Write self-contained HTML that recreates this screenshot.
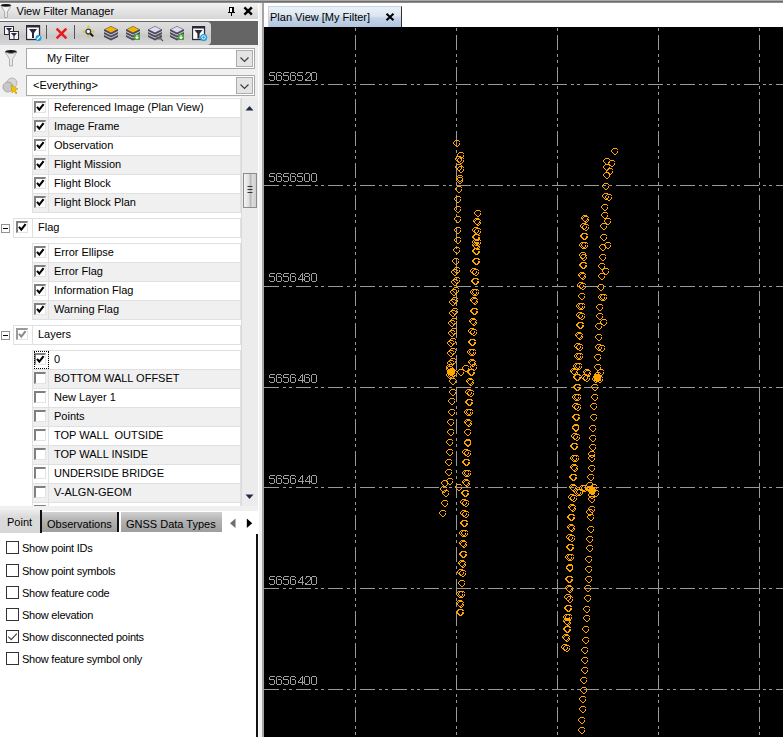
<!DOCTYPE html>
<html><head><meta charset="utf-8"><style>
*{box-sizing:border-box}
html,body{margin:0;padding:0;width:783px;height:737px;overflow:hidden;background:#f0f0f0;font-family:"Liberation Sans",sans-serif;font-size:11px;color:#000}
.abs{position:absolute}
#topstrip{position:absolute;left:0;top:0;width:783px;height:3px;background:linear-gradient(#a8a8a8 0,#a8a8a8 1px,#6e6e6e 1px,#6e6e6e 2px,#8c8c8c 2px)}
#title{position:absolute;left:0;top:3px;width:258px;height:16px;background:linear-gradient(#f2f2f2,#d6d6d6)}
#title .t{position:absolute;left:16.5px;top:1px;font-size:11px;line-height:14px;color:#000}
#tbwhite{position:absolute;left:0;top:19px;width:258px;height:2px;background:#fafafa}
#toolbar{position:absolute;left:0;top:21px;width:258px;height:24px;background:#656565}
#tbl{position:absolute;left:0;top:1px;width:211px;height:23px;background:linear-gradient(#dedede,#d2d2d2 45%,#c8c8c8 60%,#d6d6d6);border-radius:0 4px 4px 0}
.combo{position:absolute;left:26px;width:229px;height:21px;background:#fff;border:1px solid #a8a8a8}
.combo .t{position:absolute;top:3px;line-height:13px;font-size:11px}
.combo .btn{position:absolute;right:1px;top:1px;width:17px;height:17px;background:#e4e4e4;border:1px solid #acacac}
.row{position:absolute;height:20px;border:1px solid #e0e0e0}
.row .cbcell{position:absolute;left:15px;top:0;width:1px;height:18px;background:#e0e0e0}
.row .rt{position:absolute;left:21px;top:1px;line-height:14px;white-space:pre}
.cb3{position:absolute;width:12px;height:12px;background:#fff;border-top:2px solid #808080;border-left:2px solid #808080;border-right:1px solid #e3e3e3;border-bottom:1px solid #e3e3e3}
.cb3 .ck{position:absolute;left:-2px;top:-2px}
.exp{position:absolute;width:9px;height:9px;border:1px solid #939393;background:#fff}
.exp:after{content:"";position:absolute;left:1px;top:3px;width:5px;height:1px;background:#000}
#scroll{position:absolute;left:241px;top:98px;width:17px;height:408px;background:#ececec;border-left:1px solid #dadada}
#thumb{position:absolute;left:243px;top:173px;width:14px;height:35px;border:1px solid #8c8c8c;background:linear-gradient(90deg,#f4f4f4,#e0e0e0 40%,#b8b8b8 55%,#dcdcdc 70%,#cfcfcf)}
#tabpage{position:absolute;left:0;top:510px;width:258px;height:227px;background:#fff}
.tab{position:absolute;height:20px;font-size:11px;line-height:14px;padding-top:3px;border-right:2px solid #111}
.cbf{position:absolute;left:6px;width:13px;height:13px;border:1px solid #333;background:#fff}
.ct{position:absolute;left:22px;line-height:14px;font-size:11px;letter-spacing:-0.25px;white-space:nowrap}
#split{position:absolute;left:258px;top:3px;width:6px;height:734px;background:#f2f2f2;border-left:1px solid #fff}
#splitline{position:absolute;left:262px;top:3px;width:2px;height:734px;background:#a4a4a4}
#docstrip{position:absolute;left:264px;top:3px;width:519px;height:24px;background:#fff}
#doctab{position:absolute;left:268px;top:6px;width:134px;height:21px;background:linear-gradient(#eaf0f7,#dce6f1 45%,#c4d5e8 55%,#b0c5de);border-right:1px solid #333;border-top:1px solid #c8d4e4;border-left:1px solid #c8d4e4}
#doctab .t{position:absolute;left:1px;top:3px;line-height:14px;font-size:11px;color:#000}
</style></head><body>
<div id="topstrip"></div>
<div id="title"><svg class="abs" style="left:0;top:0" width="14" height="16" viewBox="0 0 14 16"><path d="M0.8 2.4 Q6 5 11.2 2.4 L7.3 9 V14.5 H4.7 V9 Z" fill="#f4f4f4" stroke="#9c9c9c" stroke-width="0.9"/><ellipse cx="6" cy="2.3" rx="4.9" ry="1.3" fill="#111"/></svg><span class="t">View Filter Manager</span>
<svg class="abs" style="left:0;top:-3px" width="258" height="20" viewBox="0 0 258 20" shape-rendering="crispEdges"><path d="M229 7h5v5h-5z M228 12h7v1h-7z M231 13h1v3h-1z" fill="#000"/><path d="M230 8h2v4h-2z" fill="#fff"/></svg>
<svg class="abs" style="left:243px;top:0px" width="11" height="16" viewBox="0 0 11 16"><path d="M2.3 5.3 L7.9 10.7 M7.9 5.3 L2.3 10.7" stroke="#000" stroke-width="2.5" stroke-linecap="square"/></svg>
</div>
<div id="tbwhite"></div>
<div id="toolbar"><div id="tbl"></div></div>

<svg class="abs" style="left:4px;top:26px" width="16" height="15" viewBox="0 0 16 15">
 <rect x="0.5" y="0.5" width="9" height="8" fill="#f4f4f8" stroke="#2a2a3a"/>
 <rect x="5.5" y="5.5" width="9" height="8" fill="#f4f4f8" stroke="#2a2a3a"/>
 <path d="M2 2 H8 L5.5 5 V8 H4.5 V5 Z" fill="#2a2a3a"/><path d="M7 7 H13 L10.5 10 V13 H9.5 V10 Z" fill="#2a2a3a"/>
</svg>
<svg class="abs" style="left:26px;top:25px" width="16" height="16" viewBox="0 0 16 16">
 <rect x="0.5" y="0.5" width="13" height="14" fill="#fff" stroke="#2a2a3a" stroke-width="1.3"/>
 <rect x="0.5" y="0.5" width="13" height="2" fill="#2a2a3a"/>
 <path d="M3 4 H11 L8 8 V13 H6 V8 Z" fill="#2a2a3a"/>
 <circle cx="12.5" cy="13" r="3" fill="#1a9ee0"/><path d="M11 14.5 L14 11.5" stroke="#fff" stroke-width="1.2"/>
</svg>
<div class="abs" style="left:46px;top:25px;width:1px;height:14px;background:#555"></div>
<svg class="abs" style="left:55px;top:27px" width="13" height="13" viewBox="0 0 13 13"><path d="M1.6 1.6 L11.4 11.4 M11.4 1.6 L1.6 11.4" stroke="#ec1a1e" stroke-width="2.5"/></svg>
<div class="abs" style="left:74px;top:25px;width:1px;height:14px;background:#555"></div>
<svg class="abs" style="left:82px;top:25px" width="14" height="14" viewBox="0 0 14 14">
 <path d="M6.5 0 L8.3 2.4 H4.7 Z M0 6.8 L2.4 5 V8.6 Z M13 6.8 L10.6 5 V8.6 Z M6.5 13 L4.7 10.6 H8.3 Z" fill="#e9c31c"/>
 <path d="M8 8.3 L11.2 11.4" stroke="#111" stroke-width="2"/>
 <circle cx="6.3" cy="6.6" r="2.4" fill="#f2f2f2" stroke="#3a3a3a" stroke-width="1.3"/>
</svg>
<svg class="abs" style="left:103px;top:25px" width="17" height="17" viewBox="0 0 17 17">
 <path d="M1 10 L8 13.5 L15 10 L15 12 L8 15.5 L1 12 Z" fill="#4a4a5e"/>
 <path d="M1 7 L8 10.5 L15 7 L15 9 L8 12.5 L1 9 Z" fill="#4a4a5e"/>
 <path d="M1 4.5 L8 1 L15 4.5 L15 6 L8 9.5 L1 6 Z" fill="#4a4a5e"/>
 <path d="M2 4.5 L8 1.6 L14 4.5 L8 7.6 Z" fill="#f2b400"/>
 
</svg><svg class="abs" style="left:125px;top:25px" width="17" height="17" viewBox="0 0 17 17">
 <path d="M1 10 L8 13.5 L15 10 L15 12 L8 15.5 L1 12 Z" fill="#4a4a5e"/>
 <path d="M1 7 L8 10.5 L15 7 L15 9 L8 12.5 L1 9 Z" fill="#4a4a5e"/>
 <path d="M1 4.5 L8 1 L15 4.5 L15 6 L8 9.5 L1 6 Z" fill="#4a4a5e"/>
 <path d="M2 4.5 L8 1.6 L14 4.5 L8 7.6 Z" fill="#f2b400"/>
 <rect x="9" y="9" width="6" height="6" fill="#4c9e3a"/><path d="M12 10 V13.5 M10.5 12 L12 13.5 L13.5 12" stroke="#fff" stroke-width="1.1"/>
</svg><svg class="abs" style="left:147px;top:25px" width="17" height="17" viewBox="0 0 17 17">
 <path d="M1 10 L8 13.5 L15 10 L15 12 L8 15.5 L1 12 Z" fill="#4a4a5e"/>
 <path d="M1 7 L8 10.5 L15 7 L15 9 L8 12.5 L1 9 Z" fill="#4a4a5e"/>
 <path d="M1 4.5 L8 1 L15 4.5 L15 6 L8 9.5 L1 6 Z" fill="#4a4a5e"/>
 <path d="M2 4.5 L8 1.6 L14 4.5 L8 7.6 Z" fill="#dcdcf0"/>
 <circle cx="12" cy="12" r="2.2" fill="none" stroke="#555" stroke-width="1"/><path d="M13.5 13.5 L16 16" stroke="#555" stroke-width="1.2"/>
</svg><svg class="abs" style="left:169px;top:25px" width="17" height="17" viewBox="0 0 17 17">
 <path d="M1 10 L8 13.5 L15 10 L15 12 L8 15.5 L1 12 Z" fill="#4a4a5e"/>
 <path d="M1 7 L8 10.5 L15 7 L15 9 L8 12.5 L1 9 Z" fill="#4a4a5e"/>
 <path d="M1 4.5 L8 1 L15 4.5 L15 6 L8 9.5 L1 6 Z" fill="#4a4a5e"/>
 <path d="M2 4.5 L8 1.6 L14 4.5 L8 7.6 Z" fill="#dcdcf0"/>
 <rect x="9" y="9" width="6" height="6" fill="#4c9e3a"/><path d="M12 10 V13.5 M10.5 12 L12 13.5 L13.5 12" stroke="#fff" stroke-width="1.1"/>
</svg><svg class="abs" style="left:192px;top:26px" width="16" height="15" viewBox="0 0 16 15">
 <rect x="0.5" y="0.5" width="12" height="13" fill="#fff" stroke="#2a2a3a" stroke-width="1.3"/>
 <rect x="0.5" y="0.5" width="12" height="2" fill="#2a2a3a"/>
 <path d="M2.5 4 H10.5 L7.6 7.8 V12.5 H5.4 V7.8 Z" fill="#2a2a3a"/>
 <circle cx="11.6" cy="11.4" r="3.5" fill="#1a9ee0"/><circle cx="11.6" cy="11.4" r="1.7" fill="none" stroke="#fff" stroke-width="1"/>
</svg>
<div class="combo" style="top:48px"><span class="t" style="left:20px">My Filter</span><div class="btn"><svg width="15" height="15" viewBox="0 0 15 15" style="position:absolute;left:0;top:0"><path d="M3.5 6.5 L7.5 10.5 L11.5 6.5" fill="none" stroke="#3a3a3a" stroke-width="1.1"/></svg></div></div>
<div class="combo" style="top:75px"><span class="t" style="left:6px">&lt;Everything&gt;</span><div class="btn"><svg width="15" height="15" viewBox="0 0 15 15" style="position:absolute;left:0;top:0"><path d="M3.5 6.5 L7.5 10.5 L11.5 6.5" fill="none" stroke="#3a3a3a" stroke-width="1.1"/></svg></div></div>
<svg class="abs" style="left:3px;top:48px" width="20" height="20" viewBox="0 0 20 20"><ellipse cx="8" cy="4" rx="6" ry="2" fill="#111"/><path d="M2 4 Q8 7 14 4 L9.5 11 L9.5 18 L6.5 18 L6.5 11 Z" fill="#e8e8e8" stroke="#9a9a9a" stroke-width="0.7"/></svg>
<svg class="abs" style="left:1px;top:75px" width="22" height="20" viewBox="0 0 22 20"><circle cx="11" cy="8" r="5" fill="#d8d8d8" stroke="#aaa" stroke-width="0.8"/><circle cx="7" cy="12" r="5" fill="#c8c8c8" stroke="#999" stroke-width="0.8"/><path d="M10 10 L17 14 L14 15 L16 18 L15 19 L13 16 L11 18 Z" fill="#f5c400" stroke="#b08a00" stroke-width="0.5"/></svg>
<div class="abs" style="left:0;top:97px;width:241px;height:409px;background:#fff;overflow:hidden"><div class="abs" style="left:0;top:-97px;width:241px;height:700px"><div class="row" style="left:32px;top:98px;width:209px;background:#fff"><div class="cbcell" style="left:15px"></div><span class="rt" style="left:21px">Referenced Image (Plan View)</span></div>
<div class="cb3" style="left:34px;top:101px;border-top-color:#808080;border-left-color:#808080"><svg class="ck" width="12" height="12" viewBox="0 0 12 12"><path d="M3 5.8 L5.3 8.6 L9.6 3.2" fill="none" stroke="#000" stroke-width="2.1"/></svg></div>
<div class="row" style="left:32px;top:117px;width:209px;background:#f0f0f0"><div class="cbcell" style="left:15px"></div><span class="rt" style="left:21px">Image Frame</span></div>
<div class="cb3" style="left:34px;top:120px;border-top-color:#808080;border-left-color:#808080"><svg class="ck" width="12" height="12" viewBox="0 0 12 12"><path d="M3 5.8 L5.3 8.6 L9.6 3.2" fill="none" stroke="#000" stroke-width="2.1"/></svg></div>
<div class="row" style="left:32px;top:136px;width:209px;background:#fff"><div class="cbcell" style="left:15px"></div><span class="rt" style="left:21px">Observation</span></div>
<div class="cb3" style="left:34px;top:139px;border-top-color:#808080;border-left-color:#808080"><svg class="ck" width="12" height="12" viewBox="0 0 12 12"><path d="M3 5.8 L5.3 8.6 L9.6 3.2" fill="none" stroke="#000" stroke-width="2.1"/></svg></div>
<div class="row" style="left:32px;top:155px;width:209px;background:#f0f0f0"><div class="cbcell" style="left:15px"></div><span class="rt" style="left:21px">Flight Mission</span></div>
<div class="cb3" style="left:34px;top:158px;border-top-color:#808080;border-left-color:#808080"><svg class="ck" width="12" height="12" viewBox="0 0 12 12"><path d="M3 5.8 L5.3 8.6 L9.6 3.2" fill="none" stroke="#000" stroke-width="2.1"/></svg></div>
<div class="row" style="left:32px;top:174px;width:209px;background:#fff"><div class="cbcell" style="left:15px"></div><span class="rt" style="left:21px">Flight Block</span></div>
<div class="cb3" style="left:34px;top:177px;border-top-color:#808080;border-left-color:#808080"><svg class="ck" width="12" height="12" viewBox="0 0 12 12"><path d="M3 5.8 L5.3 8.6 L9.6 3.2" fill="none" stroke="#000" stroke-width="2.1"/></svg></div>
<div class="row" style="left:32px;top:193px;width:209px;background:#f0f0f0"><div class="cbcell" style="left:15px"></div><span class="rt" style="left:21px">Flight Block Plan</span></div>
<div class="cb3" style="left:34px;top:196px;border-top-color:#808080;border-left-color:#808080"><svg class="ck" width="12" height="12" viewBox="0 0 12 12"><path d="M3 5.8 L5.3 8.6 L9.6 3.2" fill="none" stroke="#000" stroke-width="2.1"/></svg></div>
<div class="exp" style="left:1px;top:224px"></div>
<div class="row" style="left:13px;top:218px;width:228px;background:#fff"><div class="cbcell" style="left:18px"></div><span class="rt" style="left:24px">Flag</span></div>
<div class="cb3" style="left:16px;top:221px;border-top-color:#808080;border-left-color:#808080"><svg class="ck" width="12" height="12" viewBox="0 0 12 12"><path d="M3 5.8 L5.3 8.6 L9.6 3.2" fill="none" stroke="#000" stroke-width="2.1"/></svg></div>
<div class="row" style="left:32px;top:243px;width:209px;background:#fff"><div class="cbcell" style="left:15px"></div><span class="rt" style="left:21px">Error Ellipse</span></div>
<div class="cb3" style="left:34px;top:246px;border-top-color:#808080;border-left-color:#808080"><svg class="ck" width="12" height="12" viewBox="0 0 12 12"><path d="M3 5.8 L5.3 8.6 L9.6 3.2" fill="none" stroke="#000" stroke-width="2.1"/></svg></div>
<div class="row" style="left:32px;top:262px;width:209px;background:#f0f0f0"><div class="cbcell" style="left:15px"></div><span class="rt" style="left:21px">Error Flag</span></div>
<div class="cb3" style="left:34px;top:265px;border-top-color:#808080;border-left-color:#808080"><svg class="ck" width="12" height="12" viewBox="0 0 12 12"><path d="M3 5.8 L5.3 8.6 L9.6 3.2" fill="none" stroke="#000" stroke-width="2.1"/></svg></div>
<div class="row" style="left:32px;top:281px;width:209px;background:#fff"><div class="cbcell" style="left:15px"></div><span class="rt" style="left:21px">Information Flag</span></div>
<div class="cb3" style="left:34px;top:284px;border-top-color:#808080;border-left-color:#808080"><svg class="ck" width="12" height="12" viewBox="0 0 12 12"><path d="M3 5.8 L5.3 8.6 L9.6 3.2" fill="none" stroke="#000" stroke-width="2.1"/></svg></div>
<div class="row" style="left:32px;top:300px;width:209px;background:#f0f0f0"><div class="cbcell" style="left:15px"></div><span class="rt" style="left:21px">Warning Flag</span></div>
<div class="cb3" style="left:34px;top:303px;border-top-color:#808080;border-left-color:#808080"><svg class="ck" width="12" height="12" viewBox="0 0 12 12"><path d="M3 5.8 L5.3 8.6 L9.6 3.2" fill="none" stroke="#000" stroke-width="2.1"/></svg></div>
<div class="exp" style="left:1px;top:331px"></div>
<div class="row" style="left:13px;top:325px;width:228px;background:#fff"><div class="cbcell" style="left:18px"></div><span class="rt" style="left:24px">Layers</span></div>
<div class="cb3" style="left:16px;top:328px;border-top-color:#9a9a9a;border-left-color:#9a9a9a"><svg class="ck" width="12" height="12" viewBox="0 0 12 12"><path d="M3 5.8 L5.3 8.6 L9.6 3.2" fill="none" stroke="#8c8c8c" stroke-width="2.1"/></svg></div>
<div class="row" style="left:32px;top:350px;width:209px;background:#fff"><div class="cbcell" style="left:15px"></div><span class="rt" style="left:21px">0</span></div>
<div class="cb3" style="left:34px;top:353px;border-top-color:#808080;border-left-color:#808080"><svg class="ck" width="12" height="12" viewBox="0 0 12 12"><path d="M3 5.8 L5.3 8.6 L9.6 3.2" fill="none" stroke="#000" stroke-width="2.1"/></svg></div>
<div class="abs" style="left:34px;top:351px;width:15px;height:18px;border:1px dotted #000"></div>
<div class="row" style="left:32px;top:369px;width:209px;background:#f0f0f0"><div class="cbcell" style="left:15px"></div><span class="rt" style="left:21px">BOTTOM WALL OFFSET</span></div>
<div class="cb3" style="left:34px;top:372px;border-top-color:#808080;border-left-color:#808080"></div>
<div class="row" style="left:32px;top:388px;width:209px;background:#fff"><div class="cbcell" style="left:15px"></div><span class="rt" style="left:21px">New Layer 1</span></div>
<div class="cb3" style="left:34px;top:391px;border-top-color:#808080;border-left-color:#808080"></div>
<div class="row" style="left:32px;top:407px;width:209px;background:#f0f0f0"><div class="cbcell" style="left:15px"></div><span class="rt" style="left:21px">Points</span></div>
<div class="cb3" style="left:34px;top:410px;border-top-color:#808080;border-left-color:#808080"></div>
<div class="row" style="left:32px;top:426px;width:209px;background:#fff"><div class="cbcell" style="left:15px"></div><span class="rt" style="left:21px">TOP WALL  OUTSIDE</span></div>
<div class="cb3" style="left:34px;top:429px;border-top-color:#808080;border-left-color:#808080"></div>
<div class="row" style="left:32px;top:445px;width:209px;background:#f0f0f0"><div class="cbcell" style="left:15px"></div><span class="rt" style="left:21px">TOP WALL INSIDE</span></div>
<div class="cb3" style="left:34px;top:448px;border-top-color:#808080;border-left-color:#808080"></div>
<div class="row" style="left:32px;top:464px;width:209px;background:#fff"><div class="cbcell" style="left:15px"></div><span class="rt" style="left:21px">UNDERSIDE BRIDGE</span></div>
<div class="cb3" style="left:34px;top:467px;border-top-color:#808080;border-left-color:#808080"></div>
<div class="row" style="left:32px;top:483px;width:209px;background:#f0f0f0"><div class="cbcell" style="left:15px"></div><span class="rt" style="left:21px">V-ALGN-GEOM</span></div>
<div class="cb3" style="left:34px;top:486px;border-top-color:#808080;border-left-color:#808080"></div>
<div class="row" style="left:32px;top:502px;width:209px;background:#fff"><div class="cbcell" style="left:15px"></div><span class="rt" style="left:21px"></span></div>
<div class="cb3" style="left:34px;top:505px;border-top-color:#808080;border-left-color:#808080"></div></div></div>
<div id="scroll"></div>
<svg class="abs" style="left:245px;top:105px" width="9" height="6" viewBox="0 0 9 6"><path d="M0.5 5.5 L4.5 1 L8.5 5.5 Z" fill="#1e2a4a"/></svg>
<div id="thumb"><svg width="12" height="33" viewBox="0 0 12 33" style="position:absolute;left:0;top:0"><path d="M3.5 12.5 H8.5 M3.5 15.5 H8.5 M3.5 18.5 H8.5" stroke="#333" stroke-width="1"/></svg></div>
<svg class="abs" style="left:245px;top:494px" width="9" height="6" viewBox="0 0 9 6"><path d="M0.5 0.5 L4.5 5 L8.5 0.5 Z" fill="#1e2a4a"/></svg>
<div id="tabpage"></div>
<div class="abs" style="left:0;top:506px;width:258px;height:5px;background:#f0f0f0"></div>
<div class="tab" style="left:0;top:510px;width:42px;height:23px;background:linear-gradient(#ececec,#dadada 30%,#d8d8d8);padding-left:7px;padding-top:5px">Point</div>
<div class="tab" style="left:42px;top:512px;width:77px;height:20px;background:linear-gradient(#d0d0d0,#b4b4b4 40%,#9e9e9e);padding-left:5px;padding-top:5px">Observations</div>
<div class="tab" style="left:121px;top:512px;width:101px;height:20px;background:linear-gradient(#d0d0d0,#b4b4b4 40%,#9e9e9e);padding-left:5px;padding-top:5px;border-right:none">GNSS Data Types</div>
<svg class="abs" style="left:229px;top:518px" width="8" height="11" viewBox="0 0 8 11"><path d="M6.5 0.5 L1 5.2 L6.5 10 Z" fill="#6e6e6e"/></svg>
<svg class="abs" style="left:246px;top:518px" width="8" height="11" viewBox="0 0 8 11"><path d="M0.8 0.5 L6.2 5.2 L0.8 10 Z" fill="#000"/></svg>
<div class="abs" style="left:256px;top:534px;width:2px;height:203px;background:#111"></div>
<div class="cbf" style="top:541px"></div><div class="ct" style="top:541px">Show point IDs</div>
<div class="cbf" style="top:564px"></div><div class="ct" style="top:564px">Show point symbols</div>
<div class="cbf" style="top:586px"></div><div class="ct" style="top:586px">Show feature code</div>
<div class="cbf" style="top:608px"></div><div class="ct" style="top:608px">Show elevation</div>
<div class="cbf" style="top:630px"><svg width="13" height="13" viewBox="0 0 13 13" style="position:absolute;left:0;top:0"><path d="M1.3 5.6 L4.2 8.6 L9.8 2.6" fill="none" stroke="#444" stroke-width="1.2"/></svg></div><div class="ct" style="top:630px">Show disconnected points</div>
<div class="cbf" style="top:652px"></div><div class="ct" style="top:652px">Show feature symbol only</div>
<div id="split"></div>
<div id="splitline"></div>
<div id="docstrip"></div>
<div id="doctab"><span class="t">Plan View [My Filter]</span><svg class="abs" style="left:116px;top:6px" width="10" height="8" viewBox="0 0 10 8"><path d="M1.5 0.8 L8.5 7.2 M8.5 0.8 L1.5 7.2" stroke="#000" stroke-width="2"/></svg></div>
<svg width="519" height="710" viewBox="264 27 519 710" style="position:absolute;left:264px;top:27px;display:block">
<rect x="264" y="27" width="519" height="710" fill="#000"/>
<line x1="264" y1="84.5" x2="783" y2="84.5" stroke="#999999" stroke-width="1" stroke-dasharray="15 4 3 3 3 4" stroke-dashoffset="0"/>
<line x1="264" y1="185.5" x2="783" y2="185.5" stroke="#999999" stroke-width="1" stroke-dasharray="15 4 3 3 3 4" stroke-dashoffset="0"/>
<line x1="264" y1="286.5" x2="783" y2="286.5" stroke="#999999" stroke-width="1" stroke-dasharray="15 4 3 3 3 4" stroke-dashoffset="0"/>
<line x1="264" y1="387.5" x2="783" y2="387.5" stroke="#999999" stroke-width="1" stroke-dasharray="15 4 3 3 3 4" stroke-dashoffset="0"/>
<line x1="264" y1="487.5" x2="783" y2="487.5" stroke="#999999" stroke-width="1" stroke-dasharray="15 4 3 3 3 4" stroke-dashoffset="0"/>
<line x1="264" y1="588.5" x2="783" y2="588.5" stroke="#999999" stroke-width="1" stroke-dasharray="15 4 3 3 3 4" stroke-dashoffset="0"/>
<line x1="264" y1="689.5" x2="783" y2="689.5" stroke="#999999" stroke-width="1" stroke-dasharray="15 4 3 3 3 4" stroke-dashoffset="0"/>
<line x1="355.5" y1="27" x2="355.5" y2="737" stroke="#999999" stroke-width="1" stroke-dasharray="15 4 3 3 3 4" stroke-dashoffset="24"/>
<line x1="456.5" y1="27" x2="456.5" y2="737" stroke="#999999" stroke-width="1" stroke-dasharray="15 4 3 3 3 4" stroke-dashoffset="24"/>
<line x1="557.5" y1="27" x2="557.5" y2="737" stroke="#999999" stroke-width="1" stroke-dasharray="15 4 3 3 3 4" stroke-dashoffset="24"/>
<line x1="658.5" y1="27" x2="658.5" y2="737" stroke="#999999" stroke-width="1" stroke-dasharray="15 4 3 3 3 4" stroke-dashoffset="24"/>
<line x1="759.5" y1="27" x2="759.5" y2="737" stroke="#999999" stroke-width="1" stroke-dasharray="15 4 3 3 3 4" stroke-dashoffset="24"/>
<path fill="#a0a0a0" shape-rendering="crispEdges" d="
M270 72h1v1h-1zM271 72h1v1h-1zM272 72h1v1h-1zM273 72h1v1h-1zM274 72h1v1h-1zM269 73h1v1h-1zM269 74h1v1h-1zM269 75h1v1h-1zM270 75h1v1h-1zM271 75h1v1h-1zM272 75h1v1h-1zM273 75h1v1h-1zM274 76h1v1h-1zM274 77h1v1h-1zM274 78h1v1h-1zM269 79h1v1h-1zM274 79h1v1h-1zM270 80h1v1h-1zM271 80h1v1h-1zM272 80h1v1h-1zM273 80h1v1h-1zM277 72h1v1h-1zM278 72h1v1h-1zM279 72h1v1h-1zM280 72h1v1h-1zM276 73h1v1h-1zM281 73h1v1h-1zM276 74h1v1h-1zM276 75h1v1h-1zM278 75h1v1h-1zM279 75h1v1h-1zM280 75h1v1h-1zM276 76h1v1h-1zM281 76h1v1h-1zM276 77h1v1h-1zM281 77h1v1h-1zM276 78h1v1h-1zM281 78h1v1h-1zM276 79h1v1h-1zM281 79h1v1h-1zM277 80h1v1h-1zM278 80h1v1h-1zM279 80h1v1h-1zM280 80h1v1h-1zM284 72h1v1h-1zM285 72h1v1h-1zM286 72h1v1h-1zM287 72h1v1h-1zM288 72h1v1h-1zM283 73h1v1h-1zM283 74h1v1h-1zM283 75h1v1h-1zM284 75h1v1h-1zM285 75h1v1h-1zM286 75h1v1h-1zM287 75h1v1h-1zM288 76h1v1h-1zM288 77h1v1h-1zM288 78h1v1h-1zM283 79h1v1h-1zM288 79h1v1h-1zM284 80h1v1h-1zM285 80h1v1h-1zM286 80h1v1h-1zM287 80h1v1h-1zM291 72h1v1h-1zM292 72h1v1h-1zM293 72h1v1h-1zM294 72h1v1h-1zM290 73h1v1h-1zM295 73h1v1h-1zM290 74h1v1h-1zM290 75h1v1h-1zM292 75h1v1h-1zM293 75h1v1h-1zM294 75h1v1h-1zM290 76h1v1h-1zM295 76h1v1h-1zM290 77h1v1h-1zM295 77h1v1h-1zM290 78h1v1h-1zM295 78h1v1h-1zM290 79h1v1h-1zM295 79h1v1h-1zM291 80h1v1h-1zM292 80h1v1h-1zM293 80h1v1h-1zM294 80h1v1h-1zM298 72h1v1h-1zM299 72h1v1h-1zM300 72h1v1h-1zM301 72h1v1h-1zM302 72h1v1h-1zM297 73h1v1h-1zM297 74h1v1h-1zM297 75h1v1h-1zM298 75h1v1h-1zM299 75h1v1h-1zM300 75h1v1h-1zM301 75h1v1h-1zM302 76h1v1h-1zM302 77h1v1h-1zM302 78h1v1h-1zM297 79h1v1h-1zM302 79h1v1h-1zM298 80h1v1h-1zM299 80h1v1h-1zM300 80h1v1h-1zM301 80h1v1h-1zM306 72h1v1h-1zM307 72h1v1h-1zM308 72h1v1h-1zM309 72h1v1h-1zM306 73h1v1h-1zM310 73h1v1h-1zM305 74h1v1h-1zM310 74h1v1h-1zM310 75h1v1h-1zM309 76h1v1h-1zM308 77h1v1h-1zM307 78h1v1h-1zM305 79h1v1h-1zM306 79h1v1h-1zM305 80h1v1h-1zM306 80h1v1h-1zM307 80h1v1h-1zM308 80h1v1h-1zM309 80h1v1h-1zM310 80h1v1h-1zM312 72h1v1h-1zM313 72h1v1h-1zM314 72h1v1h-1zM315 72h1v1h-1zM311 73h1v1h-1zM316 73h1v1h-1zM311 74h1v1h-1zM316 74h1v1h-1zM311 75h1v1h-1zM316 75h1v1h-1zM311 76h1v1h-1zM316 76h1v1h-1zM311 77h1v1h-1zM316 77h1v1h-1zM311 78h1v1h-1zM316 78h1v1h-1zM311 79h1v1h-1zM316 79h1v1h-1zM312 80h1v1h-1zM313 80h1v1h-1zM314 80h1v1h-1zM315 80h1v1h-1zM270 173h1v1h-1zM271 173h1v1h-1zM272 173h1v1h-1zM273 173h1v1h-1zM274 173h1v1h-1zM269 174h1v1h-1zM269 175h1v1h-1zM269 176h1v1h-1zM270 176h1v1h-1zM271 176h1v1h-1zM272 176h1v1h-1zM273 176h1v1h-1zM274 177h1v1h-1zM274 178h1v1h-1zM274 179h1v1h-1zM269 180h1v1h-1zM274 180h1v1h-1zM270 181h1v1h-1zM271 181h1v1h-1zM272 181h1v1h-1zM273 181h1v1h-1zM277 173h1v1h-1zM278 173h1v1h-1zM279 173h1v1h-1zM280 173h1v1h-1zM276 174h1v1h-1zM281 174h1v1h-1zM276 175h1v1h-1zM276 176h1v1h-1zM278 176h1v1h-1zM279 176h1v1h-1zM280 176h1v1h-1zM276 177h1v1h-1zM281 177h1v1h-1zM276 178h1v1h-1zM281 178h1v1h-1zM276 179h1v1h-1zM281 179h1v1h-1zM276 180h1v1h-1zM281 180h1v1h-1zM277 181h1v1h-1zM278 181h1v1h-1zM279 181h1v1h-1zM280 181h1v1h-1zM284 173h1v1h-1zM285 173h1v1h-1zM286 173h1v1h-1zM287 173h1v1h-1zM288 173h1v1h-1zM283 174h1v1h-1zM283 175h1v1h-1zM283 176h1v1h-1zM284 176h1v1h-1zM285 176h1v1h-1zM286 176h1v1h-1zM287 176h1v1h-1zM288 177h1v1h-1zM288 178h1v1h-1zM288 179h1v1h-1zM283 180h1v1h-1zM288 180h1v1h-1zM284 181h1v1h-1zM285 181h1v1h-1zM286 181h1v1h-1zM287 181h1v1h-1zM291 173h1v1h-1zM292 173h1v1h-1zM293 173h1v1h-1zM294 173h1v1h-1zM290 174h1v1h-1zM295 174h1v1h-1zM290 175h1v1h-1zM290 176h1v1h-1zM292 176h1v1h-1zM293 176h1v1h-1zM294 176h1v1h-1zM290 177h1v1h-1zM295 177h1v1h-1zM290 178h1v1h-1zM295 178h1v1h-1zM290 179h1v1h-1zM295 179h1v1h-1zM290 180h1v1h-1zM295 180h1v1h-1zM291 181h1v1h-1zM292 181h1v1h-1zM293 181h1v1h-1zM294 181h1v1h-1zM298 173h1v1h-1zM299 173h1v1h-1zM300 173h1v1h-1zM301 173h1v1h-1zM302 173h1v1h-1zM297 174h1v1h-1zM297 175h1v1h-1zM297 176h1v1h-1zM298 176h1v1h-1zM299 176h1v1h-1zM300 176h1v1h-1zM301 176h1v1h-1zM302 177h1v1h-1zM302 178h1v1h-1zM302 179h1v1h-1zM297 180h1v1h-1zM302 180h1v1h-1zM298 181h1v1h-1zM299 181h1v1h-1zM300 181h1v1h-1zM301 181h1v1h-1zM305 173h1v1h-1zM306 173h1v1h-1zM307 173h1v1h-1zM308 173h1v1h-1zM304 174h1v1h-1zM309 174h1v1h-1zM304 175h1v1h-1zM309 175h1v1h-1zM304 176h1v1h-1zM309 176h1v1h-1zM304 177h1v1h-1zM309 177h1v1h-1zM304 178h1v1h-1zM309 178h1v1h-1zM304 179h1v1h-1zM309 179h1v1h-1zM304 180h1v1h-1zM309 180h1v1h-1zM305 181h1v1h-1zM306 181h1v1h-1zM307 181h1v1h-1zM308 181h1v1h-1zM312 173h1v1h-1zM313 173h1v1h-1zM314 173h1v1h-1zM315 173h1v1h-1zM311 174h1v1h-1zM316 174h1v1h-1zM311 175h1v1h-1zM316 175h1v1h-1zM311 176h1v1h-1zM316 176h1v1h-1zM311 177h1v1h-1zM316 177h1v1h-1zM311 178h1v1h-1zM316 178h1v1h-1zM311 179h1v1h-1zM316 179h1v1h-1zM311 180h1v1h-1zM316 180h1v1h-1zM312 181h1v1h-1zM313 181h1v1h-1zM314 181h1v1h-1zM315 181h1v1h-1zM270 273h1v1h-1zM271 273h1v1h-1zM272 273h1v1h-1zM273 273h1v1h-1zM274 273h1v1h-1zM269 274h1v1h-1zM269 275h1v1h-1zM269 276h1v1h-1zM270 276h1v1h-1zM271 276h1v1h-1zM272 276h1v1h-1zM273 276h1v1h-1zM274 277h1v1h-1zM274 278h1v1h-1zM274 279h1v1h-1zM269 280h1v1h-1zM274 280h1v1h-1zM270 281h1v1h-1zM271 281h1v1h-1zM272 281h1v1h-1zM273 281h1v1h-1zM277 273h1v1h-1zM278 273h1v1h-1zM279 273h1v1h-1zM280 273h1v1h-1zM276 274h1v1h-1zM281 274h1v1h-1zM276 275h1v1h-1zM276 276h1v1h-1zM278 276h1v1h-1zM279 276h1v1h-1zM280 276h1v1h-1zM276 277h1v1h-1zM281 277h1v1h-1zM276 278h1v1h-1zM281 278h1v1h-1zM276 279h1v1h-1zM281 279h1v1h-1zM276 280h1v1h-1zM281 280h1v1h-1zM277 281h1v1h-1zM278 281h1v1h-1zM279 281h1v1h-1zM280 281h1v1h-1zM284 273h1v1h-1zM285 273h1v1h-1zM286 273h1v1h-1zM287 273h1v1h-1zM288 273h1v1h-1zM283 274h1v1h-1zM283 275h1v1h-1zM283 276h1v1h-1zM284 276h1v1h-1zM285 276h1v1h-1zM286 276h1v1h-1zM287 276h1v1h-1zM288 277h1v1h-1zM288 278h1v1h-1zM288 279h1v1h-1zM283 280h1v1h-1zM288 280h1v1h-1zM284 281h1v1h-1zM285 281h1v1h-1zM286 281h1v1h-1zM287 281h1v1h-1zM291 273h1v1h-1zM292 273h1v1h-1zM293 273h1v1h-1zM294 273h1v1h-1zM290 274h1v1h-1zM295 274h1v1h-1zM290 275h1v1h-1zM290 276h1v1h-1zM292 276h1v1h-1zM293 276h1v1h-1zM294 276h1v1h-1zM290 277h1v1h-1zM295 277h1v1h-1zM290 278h1v1h-1zM295 278h1v1h-1zM290 279h1v1h-1zM295 279h1v1h-1zM290 280h1v1h-1zM295 280h1v1h-1zM291 281h1v1h-1zM292 281h1v1h-1zM293 281h1v1h-1zM294 281h1v1h-1zM302 273h1v1h-1zM301 274h1v1h-1zM302 274h1v1h-1zM300 275h1v1h-1zM302 275h1v1h-1zM300 276h1v1h-1zM302 276h1v1h-1zM299 277h1v1h-1zM302 277h1v1h-1zM298 278h1v1h-1zM302 278h1v1h-1zM298 279h1v1h-1zM299 279h1v1h-1zM300 279h1v1h-1zM301 279h1v1h-1zM302 279h1v1h-1zM303 279h1v1h-1zM302 280h1v1h-1zM302 281h1v1h-1zM305 273h1v1h-1zM306 273h1v1h-1zM307 273h1v1h-1zM308 273h1v1h-1zM304 274h1v1h-1zM309 274h1v1h-1zM304 275h1v1h-1zM309 275h1v1h-1zM305 276h1v1h-1zM306 276h1v1h-1zM307 276h1v1h-1zM308 276h1v1h-1zM304 277h1v1h-1zM309 277h1v1h-1zM304 278h1v1h-1zM309 278h1v1h-1zM304 279h1v1h-1zM309 279h1v1h-1zM304 280h1v1h-1zM309 280h1v1h-1zM305 281h1v1h-1zM306 281h1v1h-1zM307 281h1v1h-1zM308 281h1v1h-1zM312 273h1v1h-1zM313 273h1v1h-1zM314 273h1v1h-1zM315 273h1v1h-1zM311 274h1v1h-1zM316 274h1v1h-1zM311 275h1v1h-1zM316 275h1v1h-1zM311 276h1v1h-1zM316 276h1v1h-1zM311 277h1v1h-1zM316 277h1v1h-1zM311 278h1v1h-1zM316 278h1v1h-1zM311 279h1v1h-1zM316 279h1v1h-1zM311 280h1v1h-1zM316 280h1v1h-1zM312 281h1v1h-1zM313 281h1v1h-1zM314 281h1v1h-1zM315 281h1v1h-1zM270 374h1v1h-1zM271 374h1v1h-1zM272 374h1v1h-1zM273 374h1v1h-1zM274 374h1v1h-1zM269 375h1v1h-1zM269 376h1v1h-1zM269 377h1v1h-1zM270 377h1v1h-1zM271 377h1v1h-1zM272 377h1v1h-1zM273 377h1v1h-1zM274 378h1v1h-1zM274 379h1v1h-1zM274 380h1v1h-1zM269 381h1v1h-1zM274 381h1v1h-1zM270 382h1v1h-1zM271 382h1v1h-1zM272 382h1v1h-1zM273 382h1v1h-1zM277 374h1v1h-1zM278 374h1v1h-1zM279 374h1v1h-1zM280 374h1v1h-1zM276 375h1v1h-1zM281 375h1v1h-1zM276 376h1v1h-1zM276 377h1v1h-1zM278 377h1v1h-1zM279 377h1v1h-1zM280 377h1v1h-1zM276 378h1v1h-1zM281 378h1v1h-1zM276 379h1v1h-1zM281 379h1v1h-1zM276 380h1v1h-1zM281 380h1v1h-1zM276 381h1v1h-1zM281 381h1v1h-1zM277 382h1v1h-1zM278 382h1v1h-1zM279 382h1v1h-1zM280 382h1v1h-1zM284 374h1v1h-1zM285 374h1v1h-1zM286 374h1v1h-1zM287 374h1v1h-1zM288 374h1v1h-1zM283 375h1v1h-1zM283 376h1v1h-1zM283 377h1v1h-1zM284 377h1v1h-1zM285 377h1v1h-1zM286 377h1v1h-1zM287 377h1v1h-1zM288 378h1v1h-1zM288 379h1v1h-1zM288 380h1v1h-1zM283 381h1v1h-1zM288 381h1v1h-1zM284 382h1v1h-1zM285 382h1v1h-1zM286 382h1v1h-1zM287 382h1v1h-1zM291 374h1v1h-1zM292 374h1v1h-1zM293 374h1v1h-1zM294 374h1v1h-1zM290 375h1v1h-1zM295 375h1v1h-1zM290 376h1v1h-1zM290 377h1v1h-1zM292 377h1v1h-1zM293 377h1v1h-1zM294 377h1v1h-1zM290 378h1v1h-1zM295 378h1v1h-1zM290 379h1v1h-1zM295 379h1v1h-1zM290 380h1v1h-1zM295 380h1v1h-1zM290 381h1v1h-1zM295 381h1v1h-1zM291 382h1v1h-1zM292 382h1v1h-1zM293 382h1v1h-1zM294 382h1v1h-1zM302 374h1v1h-1zM301 375h1v1h-1zM302 375h1v1h-1zM300 376h1v1h-1zM302 376h1v1h-1zM300 377h1v1h-1zM302 377h1v1h-1zM299 378h1v1h-1zM302 378h1v1h-1zM298 379h1v1h-1zM302 379h1v1h-1zM298 380h1v1h-1zM299 380h1v1h-1zM300 380h1v1h-1zM301 380h1v1h-1zM302 380h1v1h-1zM303 380h1v1h-1zM302 381h1v1h-1zM302 382h1v1h-1zM305 374h1v1h-1zM306 374h1v1h-1zM307 374h1v1h-1zM308 374h1v1h-1zM304 375h1v1h-1zM309 375h1v1h-1zM304 376h1v1h-1zM304 377h1v1h-1zM306 377h1v1h-1zM307 377h1v1h-1zM308 377h1v1h-1zM304 378h1v1h-1zM309 378h1v1h-1zM304 379h1v1h-1zM309 379h1v1h-1zM304 380h1v1h-1zM309 380h1v1h-1zM304 381h1v1h-1zM309 381h1v1h-1zM305 382h1v1h-1zM306 382h1v1h-1zM307 382h1v1h-1zM308 382h1v1h-1zM312 374h1v1h-1zM313 374h1v1h-1zM314 374h1v1h-1zM315 374h1v1h-1zM311 375h1v1h-1zM316 375h1v1h-1zM311 376h1v1h-1zM316 376h1v1h-1zM311 377h1v1h-1zM316 377h1v1h-1zM311 378h1v1h-1zM316 378h1v1h-1zM311 379h1v1h-1zM316 379h1v1h-1zM311 380h1v1h-1zM316 380h1v1h-1zM311 381h1v1h-1zM316 381h1v1h-1zM312 382h1v1h-1zM313 382h1v1h-1zM314 382h1v1h-1zM315 382h1v1h-1zM270 475h1v1h-1zM271 475h1v1h-1zM272 475h1v1h-1zM273 475h1v1h-1zM274 475h1v1h-1zM269 476h1v1h-1zM269 477h1v1h-1zM269 478h1v1h-1zM270 478h1v1h-1zM271 478h1v1h-1zM272 478h1v1h-1zM273 478h1v1h-1zM274 479h1v1h-1zM274 480h1v1h-1zM274 481h1v1h-1zM269 482h1v1h-1zM274 482h1v1h-1zM270 483h1v1h-1zM271 483h1v1h-1zM272 483h1v1h-1zM273 483h1v1h-1zM277 475h1v1h-1zM278 475h1v1h-1zM279 475h1v1h-1zM280 475h1v1h-1zM276 476h1v1h-1zM281 476h1v1h-1zM276 477h1v1h-1zM276 478h1v1h-1zM278 478h1v1h-1zM279 478h1v1h-1zM280 478h1v1h-1zM276 479h1v1h-1zM281 479h1v1h-1zM276 480h1v1h-1zM281 480h1v1h-1zM276 481h1v1h-1zM281 481h1v1h-1zM276 482h1v1h-1zM281 482h1v1h-1zM277 483h1v1h-1zM278 483h1v1h-1zM279 483h1v1h-1zM280 483h1v1h-1zM284 475h1v1h-1zM285 475h1v1h-1zM286 475h1v1h-1zM287 475h1v1h-1zM288 475h1v1h-1zM283 476h1v1h-1zM283 477h1v1h-1zM283 478h1v1h-1zM284 478h1v1h-1zM285 478h1v1h-1zM286 478h1v1h-1zM287 478h1v1h-1zM288 479h1v1h-1zM288 480h1v1h-1zM288 481h1v1h-1zM283 482h1v1h-1zM288 482h1v1h-1zM284 483h1v1h-1zM285 483h1v1h-1zM286 483h1v1h-1zM287 483h1v1h-1zM291 475h1v1h-1zM292 475h1v1h-1zM293 475h1v1h-1zM294 475h1v1h-1zM290 476h1v1h-1zM295 476h1v1h-1zM290 477h1v1h-1zM290 478h1v1h-1zM292 478h1v1h-1zM293 478h1v1h-1zM294 478h1v1h-1zM290 479h1v1h-1zM295 479h1v1h-1zM290 480h1v1h-1zM295 480h1v1h-1zM290 481h1v1h-1zM295 481h1v1h-1zM290 482h1v1h-1zM295 482h1v1h-1zM291 483h1v1h-1zM292 483h1v1h-1zM293 483h1v1h-1zM294 483h1v1h-1zM302 475h1v1h-1zM301 476h1v1h-1zM302 476h1v1h-1zM300 477h1v1h-1zM302 477h1v1h-1zM300 478h1v1h-1zM302 478h1v1h-1zM299 479h1v1h-1zM302 479h1v1h-1zM298 480h1v1h-1zM302 480h1v1h-1zM298 481h1v1h-1zM299 481h1v1h-1zM300 481h1v1h-1zM301 481h1v1h-1zM302 481h1v1h-1zM303 481h1v1h-1zM302 482h1v1h-1zM302 483h1v1h-1zM309 475h1v1h-1zM308 476h1v1h-1zM309 476h1v1h-1zM307 477h1v1h-1zM309 477h1v1h-1zM307 478h1v1h-1zM309 478h1v1h-1zM306 479h1v1h-1zM309 479h1v1h-1zM305 480h1v1h-1zM309 480h1v1h-1zM305 481h1v1h-1zM306 481h1v1h-1zM307 481h1v1h-1zM308 481h1v1h-1zM309 481h1v1h-1zM310 481h1v1h-1zM309 482h1v1h-1zM309 483h1v1h-1zM312 475h1v1h-1zM313 475h1v1h-1zM314 475h1v1h-1zM315 475h1v1h-1zM311 476h1v1h-1zM316 476h1v1h-1zM311 477h1v1h-1zM316 477h1v1h-1zM311 478h1v1h-1zM316 478h1v1h-1zM311 479h1v1h-1zM316 479h1v1h-1zM311 480h1v1h-1zM316 480h1v1h-1zM311 481h1v1h-1zM316 481h1v1h-1zM311 482h1v1h-1zM316 482h1v1h-1zM312 483h1v1h-1zM313 483h1v1h-1zM314 483h1v1h-1zM315 483h1v1h-1zM270 576h1v1h-1zM271 576h1v1h-1zM272 576h1v1h-1zM273 576h1v1h-1zM274 576h1v1h-1zM269 577h1v1h-1zM269 578h1v1h-1zM269 579h1v1h-1zM270 579h1v1h-1zM271 579h1v1h-1zM272 579h1v1h-1zM273 579h1v1h-1zM274 580h1v1h-1zM274 581h1v1h-1zM274 582h1v1h-1zM269 583h1v1h-1zM274 583h1v1h-1zM270 584h1v1h-1zM271 584h1v1h-1zM272 584h1v1h-1zM273 584h1v1h-1zM277 576h1v1h-1zM278 576h1v1h-1zM279 576h1v1h-1zM280 576h1v1h-1zM276 577h1v1h-1zM281 577h1v1h-1zM276 578h1v1h-1zM276 579h1v1h-1zM278 579h1v1h-1zM279 579h1v1h-1zM280 579h1v1h-1zM276 580h1v1h-1zM281 580h1v1h-1zM276 581h1v1h-1zM281 581h1v1h-1zM276 582h1v1h-1zM281 582h1v1h-1zM276 583h1v1h-1zM281 583h1v1h-1zM277 584h1v1h-1zM278 584h1v1h-1zM279 584h1v1h-1zM280 584h1v1h-1zM284 576h1v1h-1zM285 576h1v1h-1zM286 576h1v1h-1zM287 576h1v1h-1zM288 576h1v1h-1zM283 577h1v1h-1zM283 578h1v1h-1zM283 579h1v1h-1zM284 579h1v1h-1zM285 579h1v1h-1zM286 579h1v1h-1zM287 579h1v1h-1zM288 580h1v1h-1zM288 581h1v1h-1zM288 582h1v1h-1zM283 583h1v1h-1zM288 583h1v1h-1zM284 584h1v1h-1zM285 584h1v1h-1zM286 584h1v1h-1zM287 584h1v1h-1zM291 576h1v1h-1zM292 576h1v1h-1zM293 576h1v1h-1zM294 576h1v1h-1zM290 577h1v1h-1zM295 577h1v1h-1zM290 578h1v1h-1zM290 579h1v1h-1zM292 579h1v1h-1zM293 579h1v1h-1zM294 579h1v1h-1zM290 580h1v1h-1zM295 580h1v1h-1zM290 581h1v1h-1zM295 581h1v1h-1zM290 582h1v1h-1zM295 582h1v1h-1zM290 583h1v1h-1zM295 583h1v1h-1zM291 584h1v1h-1zM292 584h1v1h-1zM293 584h1v1h-1zM294 584h1v1h-1zM302 576h1v1h-1zM301 577h1v1h-1zM302 577h1v1h-1zM300 578h1v1h-1zM302 578h1v1h-1zM300 579h1v1h-1zM302 579h1v1h-1zM299 580h1v1h-1zM302 580h1v1h-1zM298 581h1v1h-1zM302 581h1v1h-1zM298 582h1v1h-1zM299 582h1v1h-1zM300 582h1v1h-1zM301 582h1v1h-1zM302 582h1v1h-1zM303 582h1v1h-1zM302 583h1v1h-1zM302 584h1v1h-1zM306 576h1v1h-1zM307 576h1v1h-1zM308 576h1v1h-1zM309 576h1v1h-1zM306 577h1v1h-1zM310 577h1v1h-1zM305 578h1v1h-1zM310 578h1v1h-1zM310 579h1v1h-1zM309 580h1v1h-1zM308 581h1v1h-1zM307 582h1v1h-1zM305 583h1v1h-1zM306 583h1v1h-1zM305 584h1v1h-1zM306 584h1v1h-1zM307 584h1v1h-1zM308 584h1v1h-1zM309 584h1v1h-1zM310 584h1v1h-1zM312 576h1v1h-1zM313 576h1v1h-1zM314 576h1v1h-1zM315 576h1v1h-1zM311 577h1v1h-1zM316 577h1v1h-1zM311 578h1v1h-1zM316 578h1v1h-1zM311 579h1v1h-1zM316 579h1v1h-1zM311 580h1v1h-1zM316 580h1v1h-1zM311 581h1v1h-1zM316 581h1v1h-1zM311 582h1v1h-1zM316 582h1v1h-1zM311 583h1v1h-1zM316 583h1v1h-1zM312 584h1v1h-1zM313 584h1v1h-1zM314 584h1v1h-1zM315 584h1v1h-1zM270 676h1v1h-1zM271 676h1v1h-1zM272 676h1v1h-1zM273 676h1v1h-1zM274 676h1v1h-1zM269 677h1v1h-1zM269 678h1v1h-1zM269 679h1v1h-1zM270 679h1v1h-1zM271 679h1v1h-1zM272 679h1v1h-1zM273 679h1v1h-1zM274 680h1v1h-1zM274 681h1v1h-1zM274 682h1v1h-1zM269 683h1v1h-1zM274 683h1v1h-1zM270 684h1v1h-1zM271 684h1v1h-1zM272 684h1v1h-1zM273 684h1v1h-1zM277 676h1v1h-1zM278 676h1v1h-1zM279 676h1v1h-1zM280 676h1v1h-1zM276 677h1v1h-1zM281 677h1v1h-1zM276 678h1v1h-1zM276 679h1v1h-1zM278 679h1v1h-1zM279 679h1v1h-1zM280 679h1v1h-1zM276 680h1v1h-1zM281 680h1v1h-1zM276 681h1v1h-1zM281 681h1v1h-1zM276 682h1v1h-1zM281 682h1v1h-1zM276 683h1v1h-1zM281 683h1v1h-1zM277 684h1v1h-1zM278 684h1v1h-1zM279 684h1v1h-1zM280 684h1v1h-1zM284 676h1v1h-1zM285 676h1v1h-1zM286 676h1v1h-1zM287 676h1v1h-1zM288 676h1v1h-1zM283 677h1v1h-1zM283 678h1v1h-1zM283 679h1v1h-1zM284 679h1v1h-1zM285 679h1v1h-1zM286 679h1v1h-1zM287 679h1v1h-1zM288 680h1v1h-1zM288 681h1v1h-1zM288 682h1v1h-1zM283 683h1v1h-1zM288 683h1v1h-1zM284 684h1v1h-1zM285 684h1v1h-1zM286 684h1v1h-1zM287 684h1v1h-1zM291 676h1v1h-1zM292 676h1v1h-1zM293 676h1v1h-1zM294 676h1v1h-1zM290 677h1v1h-1zM295 677h1v1h-1zM290 678h1v1h-1zM290 679h1v1h-1zM292 679h1v1h-1zM293 679h1v1h-1zM294 679h1v1h-1zM290 680h1v1h-1zM295 680h1v1h-1zM290 681h1v1h-1zM295 681h1v1h-1zM290 682h1v1h-1zM295 682h1v1h-1zM290 683h1v1h-1zM295 683h1v1h-1zM291 684h1v1h-1zM292 684h1v1h-1zM293 684h1v1h-1zM294 684h1v1h-1zM302 676h1v1h-1zM301 677h1v1h-1zM302 677h1v1h-1zM300 678h1v1h-1zM302 678h1v1h-1zM300 679h1v1h-1zM302 679h1v1h-1zM299 680h1v1h-1zM302 680h1v1h-1zM298 681h1v1h-1zM302 681h1v1h-1zM298 682h1v1h-1zM299 682h1v1h-1zM300 682h1v1h-1zM301 682h1v1h-1zM302 682h1v1h-1zM303 682h1v1h-1zM302 683h1v1h-1zM302 684h1v1h-1zM305 676h1v1h-1zM306 676h1v1h-1zM307 676h1v1h-1zM308 676h1v1h-1zM304 677h1v1h-1zM309 677h1v1h-1zM304 678h1v1h-1zM309 678h1v1h-1zM304 679h1v1h-1zM309 679h1v1h-1zM304 680h1v1h-1zM309 680h1v1h-1zM304 681h1v1h-1zM309 681h1v1h-1zM304 682h1v1h-1zM309 682h1v1h-1zM304 683h1v1h-1zM309 683h1v1h-1zM305 684h1v1h-1zM306 684h1v1h-1zM307 684h1v1h-1zM308 684h1v1h-1zM312 676h1v1h-1zM313 676h1v1h-1zM314 676h1v1h-1zM315 676h1v1h-1zM311 677h1v1h-1zM316 677h1v1h-1zM311 678h1v1h-1zM316 678h1v1h-1zM311 679h1v1h-1zM316 679h1v1h-1zM311 680h1v1h-1zM316 680h1v1h-1zM311 681h1v1h-1zM316 681h1v1h-1zM311 682h1v1h-1zM316 682h1v1h-1zM311 683h1v1h-1zM316 683h1v1h-1zM312 684h1v1h-1zM313 684h1v1h-1zM314 684h1v1h-1zM315 684h1v1h-1z
"/>
<path fill="#ffa600" shape-rendering="crispEdges" d="M439 512h1v1h-1zM439 513h1v1h-1zM440 488h1v1h-1zM440 489h1v1h-1zM440 511h1v1h-1zM440 514h1v1h-1zM441 482h1v1h-1zM441 483h1v1h-1zM441 487h1v1h-1zM441 490h1v1h-1zM441 502h1v1h-1zM441 503h1v1h-1zM441 510h1v1h-1zM441 515h1v1h-1zM442 481h1v1h-1zM442 484h1v1h-1zM442 486h1v1h-1zM442 491h1v1h-1zM442 492h1v1h-1zM442 493h1v1h-1zM442 501h1v1h-1zM442 504h1v1h-1zM442 510h1v1h-1zM442 516h1v1h-1zM443 480h1v1h-1zM443 485h1v1h-1zM443 486h1v1h-1zM443 491h1v1h-1zM443 492h1v1h-1zM443 494h1v1h-1zM443 500h1v1h-1zM443 505h1v1h-1zM443 510h1v1h-1zM443 516h1v1h-1zM444 480h1v1h-1zM444 486h1v1h-1zM444 490h1v1h-1zM444 492h1v1h-1zM444 495h1v1h-1zM444 500h1v1h-1zM444 506h1v1h-1zM444 510h1v1h-1zM444 515h1v1h-1zM445 461h1v1h-1zM445 462h1v1h-1zM445 471h1v1h-1zM445 472h1v1h-1zM445 480h1v1h-1zM445 486h1v1h-1zM445 490h1v1h-1zM445 491h1v1h-1zM445 496h1v1h-1zM445 500h1v1h-1zM445 506h1v1h-1zM445 511h1v1h-1zM445 513h1v1h-1zM445 514h1v1h-1zM446 366h1v1h-1zM446 367h1v1h-1zM446 368h1v1h-1zM446 369h1v1h-1zM446 374h1v1h-1zM446 375h1v1h-1zM446 441h1v1h-1zM446 442h1v1h-1zM446 451h1v1h-1zM446 452h1v1h-1zM446 460h1v1h-1zM446 463h1v1h-1zM446 470h1v1h-1zM446 473h1v1h-1zM446 480h1v1h-1zM446 481h1v1h-1zM446 485h1v1h-1zM446 487h1v1h-1zM446 489h1v1h-1zM446 490h1v1h-1zM446 496h1v1h-1zM446 500h1v1h-1zM446 505h1v1h-1zM447 342h1v1h-1zM447 343h1v1h-1zM447 352h1v1h-1zM447 353h1v1h-1zM447 362h1v1h-1zM447 363h1v1h-1zM447 365h1v1h-1zM447 367h1v1h-1zM447 368h1v1h-1zM447 370h1v1h-1zM447 371h1v1h-1zM447 372h1v1h-1zM447 373h1v1h-1zM447 376h1v1h-1zM447 421h1v1h-1zM447 422h1v1h-1zM447 431h1v1h-1zM447 432h1v1h-1zM447 440h1v1h-1zM447 443h1v1h-1zM447 450h1v1h-1zM447 453h1v1h-1zM447 459h1v1h-1zM447 464h1v1h-1zM447 469h1v1h-1zM447 474h1v1h-1zM447 479h1v1h-1zM447 481h1v1h-1zM447 482h1v1h-1zM447 483h1v1h-1zM447 484h1v1h-1zM447 490h1v1h-1zM447 495h1v1h-1zM447 501h1v1h-1zM447 503h1v1h-1zM447 504h1v1h-1zM448 322h1v1h-1zM448 323h1v1h-1zM448 332h1v1h-1zM448 333h1v1h-1zM448 341h1v1h-1zM448 344h1v1h-1zM448 351h1v1h-1zM448 354h1v1h-1zM448 361h1v1h-1zM448 364h1v1h-1zM448 366h1v1h-1zM448 369h1v1h-1zM448 370h1v1h-1zM448 371h1v1h-1zM448 372h1v1h-1zM448 373h1v1h-1zM448 374h1v1h-1zM448 375h1v1h-1zM448 377h1v1h-1zM448 400h1v1h-1zM448 401h1v1h-1zM448 411h1v1h-1zM448 412h1v1h-1zM448 420h1v1h-1zM448 423h1v1h-1zM448 430h1v1h-1zM448 433h1v1h-1zM448 439h1v1h-1zM448 444h1v1h-1zM448 449h1v1h-1zM448 454h1v1h-1zM448 459h1v1h-1zM448 465h1v1h-1zM448 469h1v1h-1zM448 475h1v1h-1zM448 478h1v1h-1zM448 483h1v1h-1zM448 491h1v1h-1zM448 493h1v1h-1zM448 494h1v1h-1zM449 301h1v1h-1zM449 302h1v1h-1zM449 312h1v1h-1zM449 313h1v1h-1zM449 321h1v1h-1zM449 324h1v1h-1zM449 331h1v1h-1zM449 334h1v1h-1zM449 340h1v1h-1zM449 341h1v1h-1zM449 345h1v1h-1zM449 350h1v1h-1zM449 351h1v1h-1zM449 355h1v1h-1zM449 360h1v1h-1zM449 361h1v1h-1zM449 364h1v1h-1zM449 365h1v1h-1zM449 366h1v1h-1zM449 369h1v1h-1zM449 370h1v1h-1zM449 371h1v1h-1zM449 372h1v1h-1zM449 373h1v1h-1zM449 374h1v1h-1zM449 376h1v1h-1zM449 378h1v1h-1zM449 380h1v1h-1zM449 381h1v1h-1zM449 391h1v1h-1zM449 392h1v1h-1zM449 399h1v1h-1zM449 402h1v1h-1zM449 410h1v1h-1zM449 413h1v1h-1zM449 419h1v1h-1zM449 424h1v1h-1zM449 429h1v1h-1zM449 434h1v1h-1zM449 439h1v1h-1zM449 445h1v1h-1zM449 449h1v1h-1zM449 455h1v1h-1zM449 459h1v1h-1zM449 465h1v1h-1zM449 469h1v1h-1zM449 475h1v1h-1zM449 478h1v1h-1zM449 484h1v1h-1zM450 291h1v1h-1zM450 292h1v1h-1zM450 300h1v1h-1zM450 303h1v1h-1zM450 311h1v1h-1zM450 314h1v1h-1zM450 320h1v1h-1zM450 321h1v1h-1zM450 325h1v1h-1zM450 330h1v1h-1zM450 331h1v1h-1zM450 335h1v1h-1zM450 339h1v1h-1zM450 340h1v1h-1zM450 342h1v1h-1zM450 346h1v1h-1zM450 349h1v1h-1zM450 350h1v1h-1zM450 352h1v1h-1zM450 356h1v1h-1zM450 359h1v1h-1zM450 360h1v1h-1zM450 362h1v1h-1zM450 364h1v1h-1zM450 366h1v1h-1zM450 368h1v1h-1zM450 369h1v1h-1zM450 370h1v1h-1zM450 371h1v1h-1zM450 372h1v1h-1zM450 373h1v1h-1zM450 374h1v1h-1zM450 375h1v1h-1zM450 377h1v1h-1zM450 378h1v1h-1zM450 379h1v1h-1zM450 382h1v1h-1zM450 390h1v1h-1zM450 393h1v1h-1zM450 398h1v1h-1zM450 403h1v1h-1zM450 409h1v1h-1zM450 414h1v1h-1zM450 419h1v1h-1zM450 425h1v1h-1zM450 429h1v1h-1zM450 435h1v1h-1zM450 439h1v1h-1zM450 445h1v1h-1zM450 449h1v1h-1zM450 455h1v1h-1zM450 459h1v1h-1zM450 464h1v1h-1zM450 469h1v1h-1zM450 474h1v1h-1zM450 478h1v1h-1zM450 484h1v1h-1zM451 271h1v1h-1zM451 272h1v1h-1zM451 281h1v1h-1zM451 282h1v1h-1zM451 290h1v1h-1zM451 293h1v1h-1zM451 299h1v1h-1zM451 300h1v1h-1zM451 304h1v1h-1zM451 310h1v1h-1zM451 311h1v1h-1zM451 315h1v1h-1zM451 319h1v1h-1zM451 320h1v1h-1zM451 322h1v1h-1zM451 326h1v1h-1zM451 329h1v1h-1zM451 330h1v1h-1zM451 332h1v1h-1zM451 336h1v1h-1zM451 338h1v1h-1zM451 340h1v1h-1zM451 343h1v1h-1zM451 346h1v1h-1zM451 348h1v1h-1zM451 350h1v1h-1zM451 353h1v1h-1zM451 356h1v1h-1zM451 358h1v1h-1zM451 360h1v1h-1zM451 363h1v1h-1zM451 364h1v1h-1zM451 366h1v1h-1zM451 368h1v1h-1zM451 369h1v1h-1zM451 370h1v1h-1zM451 371h1v1h-1zM451 372h1v1h-1zM451 373h1v1h-1zM451 374h1v1h-1zM451 375h1v1h-1zM451 377h1v1h-1zM451 378h1v1h-1zM451 383h1v1h-1zM451 389h1v1h-1zM451 394h1v1h-1zM451 398h1v1h-1zM451 404h1v1h-1zM451 409h1v1h-1zM451 415h1v1h-1zM451 419h1v1h-1zM451 425h1v1h-1zM451 429h1v1h-1zM451 435h1v1h-1zM451 439h1v1h-1zM451 444h1v1h-1zM451 449h1v1h-1zM451 454h1v1h-1zM451 460h1v1h-1zM451 462h1v1h-1zM451 463h1v1h-1zM451 470h1v1h-1zM451 472h1v1h-1zM451 473h1v1h-1zM451 478h1v1h-1zM451 483h1v1h-1zM452 260h1v1h-1zM452 261h1v1h-1zM452 270h1v1h-1zM452 273h1v1h-1zM452 280h1v1h-1zM452 283h1v1h-1zM452 289h1v1h-1zM452 290h1v1h-1zM452 294h1v1h-1zM452 298h1v1h-1zM452 299h1v1h-1zM452 301h1v1h-1zM452 305h1v1h-1zM452 309h1v1h-1zM452 310h1v1h-1zM452 312h1v1h-1zM452 316h1v1h-1zM452 318h1v1h-1zM452 320h1v1h-1zM452 323h1v1h-1zM452 326h1v1h-1zM452 328h1v1h-1zM452 330h1v1h-1zM452 333h1v1h-1zM452 336h1v1h-1zM452 338h1v1h-1zM452 340h1v1h-1zM452 344h1v1h-1zM452 345h1v1h-1zM452 348h1v1h-1zM452 350h1v1h-1zM452 354h1v1h-1zM452 355h1v1h-1zM452 358h1v1h-1zM452 360h1v1h-1zM452 364h1v1h-1zM452 365h1v1h-1zM452 367h1v1h-1zM452 368h1v1h-1zM452 369h1v1h-1zM452 370h1v1h-1zM452 371h1v1h-1zM452 372h1v1h-1zM452 373h1v1h-1zM452 374h1v1h-1zM452 375h1v1h-1zM452 376h1v1h-1zM452 378h1v1h-1zM452 384h1v1h-1zM452 389h1v1h-1zM452 395h1v1h-1zM452 398h1v1h-1zM452 404h1v1h-1zM452 409h1v1h-1zM452 415h1v1h-1zM452 419h1v1h-1zM452 424h1v1h-1zM452 429h1v1h-1zM452 434h1v1h-1zM452 440h1v1h-1zM452 442h1v1h-1zM452 443h1v1h-1zM452 450h1v1h-1zM452 452h1v1h-1zM452 453h1v1h-1zM452 479h1v1h-1zM452 481h1v1h-1zM452 482h1v1h-1zM453 142h1v1h-1zM453 143h1v1h-1zM453 249h1v1h-1zM453 250h1v1h-1zM453 259h1v1h-1zM453 262h1v1h-1zM453 269h1v1h-1zM453 270h1v1h-1zM453 274h1v1h-1zM453 279h1v1h-1zM453 280h1v1h-1zM453 284h1v1h-1zM453 288h1v1h-1zM453 289h1v1h-1zM453 291h1v1h-1zM453 295h1v1h-1zM453 297h1v1h-1zM453 299h1v1h-1zM453 302h1v1h-1zM453 305h1v1h-1zM453 308h1v1h-1zM453 310h1v1h-1zM453 313h1v1h-1zM453 316h1v1h-1zM453 318h1v1h-1zM453 320h1v1h-1zM453 324h1v1h-1zM453 325h1v1h-1zM453 328h1v1h-1zM453 330h1v1h-1zM453 334h1v1h-1zM453 335h1v1h-1zM453 338h1v1h-1zM453 341h1v1h-1zM453 343h1v1h-1zM453 344h1v1h-1zM453 348h1v1h-1zM453 351h1v1h-1zM453 353h1v1h-1zM453 354h1v1h-1zM453 358h1v1h-1zM453 361h1v1h-1zM453 363h1v1h-1zM453 364h1v1h-1zM453 368h1v1h-1zM453 369h1v1h-1zM453 370h1v1h-1zM453 371h1v1h-1zM453 372h1v1h-1zM453 373h1v1h-1zM453 374h1v1h-1zM453 376h1v1h-1zM453 377h1v1h-1zM453 378h1v1h-1zM453 384h1v1h-1zM453 389h1v1h-1zM453 395h1v1h-1zM453 398h1v1h-1zM453 403h1v1h-1zM453 409h1v1h-1zM453 414h1v1h-1zM453 420h1v1h-1zM453 422h1v1h-1zM453 423h1v1h-1zM453 430h1v1h-1zM453 432h1v1h-1zM453 433h1v1h-1zM454 141h1v1h-1zM454 144h1v1h-1zM454 198h1v1h-1zM454 199h1v1h-1zM454 208h1v1h-1zM454 209h1v1h-1zM454 218h1v1h-1zM454 219h1v1h-1zM454 229h1v1h-1zM454 230h1v1h-1zM454 239h1v1h-1zM454 240h1v1h-1zM454 248h1v1h-1zM454 251h1v1h-1zM454 258h1v1h-1zM454 263h1v1h-1zM454 268h1v1h-1zM454 269h1v1h-1zM454 271h1v1h-1zM454 275h1v1h-1zM454 278h1v1h-1zM454 279h1v1h-1zM454 281h1v1h-1zM454 285h1v1h-1zM454 287h1v1h-1zM454 289h1v1h-1zM454 292h1v1h-1zM454 295h1v1h-1zM454 297h1v1h-1zM454 299h1v1h-1zM454 303h1v1h-1zM454 304h1v1h-1zM454 308h1v1h-1zM454 310h1v1h-1zM454 314h1v1h-1zM454 315h1v1h-1zM454 318h1v1h-1zM454 321h1v1h-1zM454 323h1v1h-1zM454 324h1v1h-1zM454 328h1v1h-1zM454 331h1v1h-1zM454 333h1v1h-1zM454 334h1v1h-1zM454 338h1v1h-1zM454 343h1v1h-1zM454 348h1v1h-1zM454 353h1v1h-1zM454 358h1v1h-1zM454 363h1v1h-1zM454 369h1v1h-1zM454 370h1v1h-1zM454 371h1v1h-1zM454 372h1v1h-1zM454 373h1v1h-1zM454 375h1v1h-1zM454 376h1v1h-1zM454 378h1v1h-1zM454 383h1v1h-1zM454 389h1v1h-1zM454 394h1v1h-1zM454 399h1v1h-1zM454 401h1v1h-1zM454 402h1v1h-1zM454 410h1v1h-1zM454 412h1v1h-1zM454 413h1v1h-1zM455 140h1v1h-1zM455 145h1v1h-1zM455 158h1v1h-1zM455 159h1v1h-1zM455 166h1v1h-1zM455 167h1v1h-1zM455 188h1v1h-1zM455 189h1v1h-1zM455 197h1v1h-1zM455 200h1v1h-1zM455 207h1v1h-1zM455 210h1v1h-1zM455 217h1v1h-1zM455 220h1v1h-1zM455 228h1v1h-1zM455 231h1v1h-1zM455 238h1v1h-1zM455 241h1v1h-1zM455 247h1v1h-1zM455 252h1v1h-1zM455 258h1v1h-1zM455 264h1v1h-1zM455 267h1v1h-1zM455 269h1v1h-1zM455 272h1v1h-1zM455 275h1v1h-1zM455 277h1v1h-1zM455 279h1v1h-1zM455 282h1v1h-1zM455 285h1v1h-1zM455 287h1v1h-1zM455 289h1v1h-1zM455 293h1v1h-1zM455 294h1v1h-1zM455 297h1v1h-1zM455 300h1v1h-1zM455 302h1v1h-1zM455 303h1v1h-1zM455 308h1v1h-1zM455 311h1v1h-1zM455 313h1v1h-1zM455 314h1v1h-1zM455 318h1v1h-1zM455 323h1v1h-1zM455 328h1v1h-1zM455 333h1v1h-1zM455 339h1v1h-1zM455 341h1v1h-1zM455 342h1v1h-1zM455 349h1v1h-1zM455 351h1v1h-1zM455 352h1v1h-1zM455 359h1v1h-1zM455 361h1v1h-1zM455 362h1v1h-1zM455 370h1v1h-1zM455 375h1v1h-1zM455 379h1v1h-1zM455 381h1v1h-1zM455 382h1v1h-1zM455 390h1v1h-1zM455 392h1v1h-1zM455 393h1v1h-1zM455 486h1v1h-1zM455 487h1v1h-1zM456 140h1v1h-1zM456 146h1v1h-1zM456 157h1v1h-1zM456 160h1v1h-1zM456 165h1v1h-1zM456 168h1v1h-1zM456 177h1v1h-1zM456 178h1v1h-1zM456 179h1v1h-1zM456 180h1v1h-1zM456 187h1v1h-1zM456 190h1v1h-1zM456 196h1v1h-1zM456 201h1v1h-1zM456 206h1v1h-1zM456 211h1v1h-1zM456 216h1v1h-1zM456 221h1v1h-1zM456 227h1v1h-1zM456 232h1v1h-1zM456 237h1v1h-1zM456 242h1v1h-1zM456 247h1v1h-1zM456 253h1v1h-1zM456 258h1v1h-1zM456 264h1v1h-1zM456 267h1v1h-1zM456 269h1v1h-1zM456 273h1v1h-1zM456 274h1v1h-1zM456 277h1v1h-1zM456 279h1v1h-1zM456 283h1v1h-1zM456 284h1v1h-1zM456 287h1v1h-1zM456 290h1v1h-1zM456 292h1v1h-1zM456 293h1v1h-1zM456 297h1v1h-1zM456 302h1v1h-1zM456 308h1v1h-1zM456 313h1v1h-1zM456 319h1v1h-1zM456 321h1v1h-1zM456 322h1v1h-1zM456 329h1v1h-1zM456 331h1v1h-1zM456 332h1v1h-1zM456 371h1v1h-1zM456 373h1v1h-1zM456 374h1v1h-1zM456 485h1v1h-1zM456 488h1v1h-1zM456 593h1v1h-1zM456 594h1v1h-1zM456 602h1v1h-1zM456 603h1v1h-1zM456 611h1v1h-1zM456 612h1v1h-1zM457 140h1v1h-1zM457 146h1v1h-1zM457 154h1v1h-1zM457 155h1v1h-1zM457 156h1v1h-1zM457 159h1v1h-1zM457 160h1v1h-1zM457 161h1v1h-1zM457 164h1v1h-1zM457 168h1v1h-1zM457 169h1v1h-1zM457 176h1v1h-1zM457 178h1v1h-1zM457 179h1v1h-1zM457 181h1v1h-1zM457 186h1v1h-1zM457 191h1v1h-1zM457 196h1v1h-1zM457 202h1v1h-1zM457 206h1v1h-1zM457 212h1v1h-1zM457 216h1v1h-1zM457 222h1v1h-1zM457 227h1v1h-1zM457 233h1v1h-1zM457 237h1v1h-1zM457 243h1v1h-1zM457 247h1v1h-1zM457 253h1v1h-1zM457 258h1v1h-1zM457 263h1v1h-1zM457 267h1v1h-1zM457 270h1v1h-1zM457 272h1v1h-1zM457 273h1v1h-1zM457 277h1v1h-1zM457 280h1v1h-1zM457 282h1v1h-1zM457 283h1v1h-1zM457 287h1v1h-1zM457 292h1v1h-1zM457 298h1v1h-1zM457 300h1v1h-1zM457 301h1v1h-1zM457 309h1v1h-1zM457 311h1v1h-1zM457 312h1v1h-1zM457 371h1v1h-1zM457 372h1v1h-1zM457 484h1v1h-1zM457 489h1v1h-1zM457 571h1v1h-1zM457 572h1v1h-1zM457 592h1v1h-1zM457 595h1v1h-1zM457 601h1v1h-1zM457 603h1v1h-1zM457 604h1v1h-1zM457 610h1v1h-1zM457 611h1v1h-1zM457 612h1v1h-1zM457 613h1v1h-1zM458 140h1v1h-1zM458 145h1v1h-1zM458 153h1v1h-1zM458 156h1v1h-1zM458 158h1v1h-1zM458 161h1v1h-1zM458 162h1v1h-1zM458 164h1v1h-1zM458 167h1v1h-1zM458 170h1v1h-1zM458 175h1v1h-1zM458 177h1v1h-1zM458 180h1v1h-1zM458 182h1v1h-1zM458 186h1v1h-1zM458 192h1v1h-1zM458 196h1v1h-1zM458 202h1v1h-1zM458 206h1v1h-1zM458 212h1v1h-1zM458 216h1v1h-1zM458 222h1v1h-1zM458 227h1v1h-1zM458 233h1v1h-1zM458 237h1v1h-1zM458 243h1v1h-1zM458 247h1v1h-1zM458 252h1v1h-1zM458 259h1v1h-1zM458 261h1v1h-1zM458 262h1v1h-1zM458 267h1v1h-1zM458 272h1v1h-1zM458 277h1v1h-1zM458 282h1v1h-1zM458 288h1v1h-1zM458 290h1v1h-1zM458 291h1v1h-1zM458 370h1v1h-1zM458 373h1v1h-1zM458 484h1v1h-1zM458 490h1v1h-1zM458 562h1v1h-1zM458 563h1v1h-1zM458 570h1v1h-1zM458 573h1v1h-1zM458 582h1v1h-1zM458 583h1v1h-1zM458 591h1v1h-1zM458 593h1v1h-1zM458 594h1v1h-1zM458 596h1v1h-1zM458 600h1v1h-1zM458 602h1v1h-1zM458 605h1v1h-1zM458 609h1v1h-1zM458 610h1v1h-1zM458 613h1v1h-1zM458 614h1v1h-1zM459 141h1v1h-1zM459 143h1v1h-1zM459 144h1v1h-1zM459 152h1v1h-1zM459 156h1v1h-1zM459 157h1v1h-1zM459 162h1v1h-1zM459 164h1v1h-1zM459 166h1v1h-1zM459 170h1v1h-1zM459 171h1v1h-1zM459 175h1v1h-1zM459 177h1v1h-1zM459 181h1v1h-1zM459 183h1v1h-1zM459 186h1v1h-1zM459 192h1v1h-1zM459 196h1v1h-1zM459 201h1v1h-1zM459 206h1v1h-1zM459 211h1v1h-1zM459 216h1v1h-1zM459 221h1v1h-1zM459 227h1v1h-1zM459 232h1v1h-1zM459 237h1v1h-1zM459 242h1v1h-1zM459 248h1v1h-1zM459 250h1v1h-1zM459 251h1v1h-1zM459 268h1v1h-1zM459 270h1v1h-1zM459 271h1v1h-1zM459 278h1v1h-1zM459 280h1v1h-1zM459 281h1v1h-1zM459 369h1v1h-1zM459 374h1v1h-1zM459 484h1v1h-1zM459 490h1v1h-1zM459 532h1v1h-1zM459 533h1v1h-1zM459 542h1v1h-1zM459 543h1v1h-1zM459 553h1v1h-1zM459 554h1v1h-1zM459 561h1v1h-1zM459 563h1v1h-1zM459 564h1v1h-1zM459 569h1v1h-1zM459 572h1v1h-1zM459 573h1v1h-1zM459 574h1v1h-1zM459 581h1v1h-1zM459 584h1v1h-1zM459 591h1v1h-1zM459 592h1v1h-1zM459 595h1v1h-1zM459 597h1v1h-1zM459 600h1v1h-1zM459 601h1v1h-1zM459 606h1v1h-1zM459 609h1v1h-1zM459 614h1v1h-1zM459 615h1v1h-1zM460 152h1v1h-1zM460 156h1v1h-1zM460 157h1v1h-1zM460 158h1v1h-1zM460 161h1v1h-1zM460 163h1v1h-1zM460 164h1v1h-1zM460 166h1v1h-1zM460 169h1v1h-1zM460 172h1v1h-1zM460 175h1v1h-1zM460 177h1v1h-1zM460 181h1v1h-1zM460 183h1v1h-1zM460 186h1v1h-1zM460 191h1v1h-1zM460 197h1v1h-1zM460 199h1v1h-1zM460 200h1v1h-1zM460 207h1v1h-1zM460 209h1v1h-1zM460 210h1v1h-1zM460 217h1v1h-1zM460 219h1v1h-1zM460 220h1v1h-1zM460 228h1v1h-1zM460 230h1v1h-1zM460 231h1v1h-1zM460 238h1v1h-1zM460 240h1v1h-1zM460 241h1v1h-1zM460 369h1v1h-1zM460 375h1v1h-1zM460 484h1v1h-1zM460 489h1v1h-1zM460 501h1v1h-1zM460 502h1v1h-1zM460 512h1v1h-1zM460 513h1v1h-1zM460 522h1v1h-1zM460 523h1v1h-1zM460 531h1v1h-1zM460 534h1v1h-1zM460 541h1v1h-1zM460 543h1v1h-1zM460 544h1v1h-1zM460 552h1v1h-1zM460 553h1v1h-1zM460 554h1v1h-1zM460 555h1v1h-1zM460 560h1v1h-1zM460 562h1v1h-1zM460 565h1v1h-1zM460 569h1v1h-1zM460 571h1v1h-1zM460 574h1v1h-1zM460 575h1v1h-1zM460 580h1v1h-1zM460 585h1v1h-1zM460 591h1v1h-1zM460 596h1v1h-1zM460 597h1v1h-1zM460 600h1v1h-1zM460 601h1v1h-1zM460 606h1v1h-1zM460 607h1v1h-1zM460 609h1v1h-1zM460 615h1v1h-1zM461 152h1v1h-1zM461 157h1v1h-1zM461 158h1v1h-1zM461 159h1v1h-1zM461 160h1v1h-1zM461 163h1v1h-1zM461 165h1v1h-1zM461 166h1v1h-1zM461 167h1v1h-1zM461 168h1v1h-1zM461 172h1v1h-1zM461 175h1v1h-1zM461 177h1v1h-1zM461 180h1v1h-1zM461 182h1v1h-1zM461 187h1v1h-1zM461 189h1v1h-1zM461 190h1v1h-1zM461 369h1v1h-1zM461 375h1v1h-1zM461 485h1v1h-1zM461 487h1v1h-1zM461 488h1v1h-1zM461 492h1v1h-1zM461 493h1v1h-1zM461 500h1v1h-1zM461 503h1v1h-1zM461 511h1v1h-1zM461 514h1v1h-1zM461 521h1v1h-1zM461 522h1v1h-1zM461 523h1v1h-1zM461 524h1v1h-1zM461 530h1v1h-1zM461 532h1v1h-1zM461 533h1v1h-1zM461 535h1v1h-1zM461 540h1v1h-1zM461 542h1v1h-1zM461 545h1v1h-1zM461 551h1v1h-1zM461 552h1v1h-1zM461 555h1v1h-1zM461 556h1v1h-1zM461 560h1v1h-1zM461 561h1v1h-1zM461 566h1v1h-1zM461 569h1v1h-1zM461 570h1v1h-1zM461 575h1v1h-1zM461 580h1v1h-1zM461 586h1v1h-1zM461 591h1v1h-1zM461 596h1v1h-1zM461 597h1v1h-1zM461 600h1v1h-1zM461 601h1v1h-1zM461 605h1v1h-1zM461 607h1v1h-1zM461 609h1v1h-1zM461 614h1v1h-1zM461 615h1v1h-1zM462 152h1v1h-1zM462 157h1v1h-1zM462 162h1v1h-1zM462 166h1v1h-1zM462 171h1v1h-1zM462 176h1v1h-1zM462 178h1v1h-1zM462 179h1v1h-1zM462 180h1v1h-1zM462 181h1v1h-1zM462 367h1v1h-1zM462 368h1v1h-1zM462 369h1v1h-1zM462 374h1v1h-1zM462 451h1v1h-1zM462 452h1v1h-1zM462 461h1v1h-1zM462 462h1v1h-1zM462 472h1v1h-1zM462 473h1v1h-1zM462 481h1v1h-1zM462 482h1v1h-1zM462 491h1v1h-1zM462 492h1v1h-1zM462 493h1v1h-1zM462 494h1v1h-1zM462 499h1v1h-1zM462 502h1v1h-1zM462 503h1v1h-1zM462 504h1v1h-1zM462 510h1v1h-1zM462 513h1v1h-1zM462 514h1v1h-1zM462 515h1v1h-1zM462 520h1v1h-1zM462 521h1v1h-1zM462 524h1v1h-1zM462 525h1v1h-1zM462 530h1v1h-1zM462 531h1v1h-1zM462 534h1v1h-1zM462 536h1v1h-1zM462 540h1v1h-1zM462 541h1v1h-1zM462 546h1v1h-1zM462 551h1v1h-1zM462 556h1v1h-1zM462 557h1v1h-1zM462 560h1v1h-1zM462 561h1v1h-1zM462 566h1v1h-1zM462 567h1v1h-1zM462 569h1v1h-1zM462 570h1v1h-1zM462 574h1v1h-1zM462 576h1v1h-1zM462 580h1v1h-1zM462 586h1v1h-1zM462 591h1v1h-1zM462 592h1v1h-1zM462 594h1v1h-1zM462 595h1v1h-1zM462 597h1v1h-1zM462 601h1v1h-1zM462 603h1v1h-1zM462 604h1v1h-1zM462 606h1v1h-1zM462 609h1v1h-1zM462 610h1v1h-1zM462 612h1v1h-1zM462 613h1v1h-1zM462 614h1v1h-1zM463 153h1v1h-1zM463 155h1v1h-1zM463 156h1v1h-1zM463 158h1v1h-1zM463 160h1v1h-1zM463 161h1v1h-1zM463 167h1v1h-1zM463 169h1v1h-1zM463 170h1v1h-1zM463 366h1v1h-1zM463 369h1v1h-1zM463 370h1v1h-1zM463 372h1v1h-1zM463 373h1v1h-1zM463 450h1v1h-1zM463 453h1v1h-1zM463 460h1v1h-1zM463 461h1v1h-1zM463 462h1v1h-1zM463 463h1v1h-1zM463 471h1v1h-1zM463 474h1v1h-1zM463 480h1v1h-1zM463 482h1v1h-1zM463 483h1v1h-1zM463 490h1v1h-1zM463 491h1v1h-1zM463 494h1v1h-1zM463 495h1v1h-1zM463 499h1v1h-1zM463 501h1v1h-1zM463 504h1v1h-1zM463 505h1v1h-1zM463 510h1v1h-1zM463 512h1v1h-1zM463 515h1v1h-1zM463 516h1v1h-1zM463 520h1v1h-1zM463 525h1v1h-1zM463 526h1v1h-1zM463 530h1v1h-1zM463 535h1v1h-1zM463 536h1v1h-1zM463 540h1v1h-1zM463 541h1v1h-1zM463 546h1v1h-1zM463 547h1v1h-1zM463 551h1v1h-1zM463 557h1v1h-1zM463 560h1v1h-1zM463 561h1v1h-1zM463 565h1v1h-1zM463 567h1v1h-1zM463 570h1v1h-1zM463 572h1v1h-1zM463 573h1v1h-1zM463 576h1v1h-1zM463 580h1v1h-1zM463 585h1v1h-1zM463 591h1v1h-1zM463 596h1v1h-1zM463 602h1v1h-1zM463 604h1v1h-1zM463 605h1v1h-1zM463 610h1v1h-1zM463 612h1v1h-1zM463 613h1v1h-1zM464 365h1v1h-1zM464 370h1v1h-1zM464 411h1v1h-1zM464 412h1v1h-1zM464 421h1v1h-1zM464 422h1v1h-1zM464 431h1v1h-1zM464 432h1v1h-1zM464 441h1v1h-1zM464 442h1v1h-1zM464 443h1v1h-1zM464 449h1v1h-1zM464 452h1v1h-1zM464 453h1v1h-1zM464 454h1v1h-1zM464 459h1v1h-1zM464 460h1v1h-1zM464 463h1v1h-1zM464 464h1v1h-1zM464 470h1v1h-1zM464 472h1v1h-1zM464 473h1v1h-1zM464 475h1v1h-1zM464 479h1v1h-1zM464 481h1v1h-1zM464 484h1v1h-1zM464 490h1v1h-1zM464 495h1v1h-1zM464 496h1v1h-1zM464 499h1v1h-1zM464 500h1v1h-1zM464 505h1v1h-1zM464 510h1v1h-1zM464 511h1v1h-1zM464 516h1v1h-1zM464 520h1v1h-1zM464 526h1v1h-1zM464 530h1v1h-1zM464 535h1v1h-1zM464 536h1v1h-1zM464 540h1v1h-1zM464 541h1v1h-1zM464 545h1v1h-1zM464 547h1v1h-1zM464 551h1v1h-1zM464 556h1v1h-1zM464 557h1v1h-1zM464 561h1v1h-1zM464 563h1v1h-1zM464 564h1v1h-1zM464 566h1v1h-1zM464 570h1v1h-1zM464 575h1v1h-1zM464 581h1v1h-1zM464 583h1v1h-1zM464 584h1v1h-1zM464 592h1v1h-1zM464 594h1v1h-1zM464 595h1v1h-1zM465 365h1v1h-1zM465 371h1v1h-1zM465 391h1v1h-1zM465 392h1v1h-1zM465 401h1v1h-1zM465 402h1v1h-1zM465 410h1v1h-1zM465 413h1v1h-1zM465 420h1v1h-1zM465 422h1v1h-1zM465 423h1v1h-1zM465 430h1v1h-1zM465 433h1v1h-1zM465 440h1v1h-1zM465 441h1v1h-1zM465 443h1v1h-1zM465 444h1v1h-1zM465 449h1v1h-1zM465 451h1v1h-1zM465 454h1v1h-1zM465 455h1v1h-1zM465 459h1v1h-1zM465 464h1v1h-1zM465 465h1v1h-1zM465 470h1v1h-1zM465 471h1v1h-1zM465 474h1v1h-1zM465 476h1v1h-1zM465 479h1v1h-1zM465 480h1v1h-1zM465 485h1v1h-1zM465 490h1v1h-1zM465 496h1v1h-1zM465 499h1v1h-1zM465 500h1v1h-1zM465 504h1v1h-1zM465 506h1v1h-1zM465 510h1v1h-1zM465 511h1v1h-1zM465 515h1v1h-1zM465 517h1v1h-1zM465 520h1v1h-1zM465 525h1v1h-1zM465 526h1v1h-1zM465 530h1v1h-1zM465 531h1v1h-1zM465 533h1v1h-1zM465 534h1v1h-1zM465 536h1v1h-1zM465 541h1v1h-1zM465 543h1v1h-1zM465 544h1v1h-1zM465 546h1v1h-1zM465 551h1v1h-1zM465 552h1v1h-1zM465 554h1v1h-1zM465 555h1v1h-1zM465 556h1v1h-1zM465 562h1v1h-1zM465 564h1v1h-1zM465 565h1v1h-1zM465 571h1v1h-1zM465 573h1v1h-1zM465 574h1v1h-1zM466 365h1v1h-1zM466 371h1v1h-1zM466 380h1v1h-1zM466 381h1v1h-1zM466 390h1v1h-1zM466 393h1v1h-1zM466 400h1v1h-1zM466 401h1v1h-1zM466 402h1v1h-1zM466 403h1v1h-1zM466 409h1v1h-1zM466 411h1v1h-1zM466 412h1v1h-1zM466 414h1v1h-1zM466 419h1v1h-1zM466 421h1v1h-1zM466 424h1v1h-1zM466 429h1v1h-1zM466 434h1v1h-1zM466 439h1v1h-1zM466 440h1v1h-1zM466 444h1v1h-1zM466 445h1v1h-1zM466 449h1v1h-1zM466 450h1v1h-1zM466 455h1v1h-1zM466 459h1v1h-1zM466 465h1v1h-1zM466 470h1v1h-1zM466 475h1v1h-1zM466 476h1v1h-1zM466 479h1v1h-1zM466 480h1v1h-1zM466 485h1v1h-1zM466 486h1v1h-1zM466 490h1v1h-1zM466 495h1v1h-1zM466 496h1v1h-1zM466 500h1v1h-1zM466 502h1v1h-1zM466 503h1v1h-1zM466 506h1v1h-1zM466 511h1v1h-1zM466 513h1v1h-1zM466 514h1v1h-1zM466 517h1v1h-1zM466 520h1v1h-1zM466 521h1v1h-1zM466 523h1v1h-1zM466 524h1v1h-1zM466 525h1v1h-1zM466 530h1v1h-1zM466 535h1v1h-1zM466 542h1v1h-1zM466 544h1v1h-1zM466 545h1v1h-1zM466 552h1v1h-1zM466 554h1v1h-1zM466 555h1v1h-1zM467 351h1v1h-1zM467 352h1v1h-1zM467 365h1v1h-1zM467 370h1v1h-1zM467 371h1v1h-1zM467 372h1v1h-1zM467 379h1v1h-1zM467 381h1v1h-1zM467 382h1v1h-1zM467 389h1v1h-1zM467 392h1v1h-1zM467 393h1v1h-1zM467 394h1v1h-1zM467 399h1v1h-1zM467 400h1v1h-1zM467 403h1v1h-1zM467 404h1v1h-1zM467 409h1v1h-1zM467 410h1v1h-1zM467 413h1v1h-1zM467 415h1v1h-1zM467 419h1v1h-1zM467 420h1v1h-1zM467 425h1v1h-1zM467 429h1v1h-1zM467 435h1v1h-1zM467 439h1v1h-1zM467 440h1v1h-1zM467 445h1v1h-1zM467 446h1v1h-1zM467 449h1v1h-1zM467 450h1v1h-1zM467 454h1v1h-1zM467 456h1v1h-1zM467 459h1v1h-1zM467 464h1v1h-1zM467 465h1v1h-1zM467 470h1v1h-1zM467 475h1v1h-1zM467 476h1v1h-1zM467 479h1v1h-1zM467 480h1v1h-1zM467 484h1v1h-1zM467 486h1v1h-1zM467 490h1v1h-1zM467 491h1v1h-1zM467 493h1v1h-1zM467 494h1v1h-1zM467 495h1v1h-1zM467 500h1v1h-1zM467 505h1v1h-1zM467 511h1v1h-1zM467 516h1v1h-1zM467 521h1v1h-1zM467 523h1v1h-1zM467 524h1v1h-1zM467 531h1v1h-1zM467 533h1v1h-1zM467 534h1v1h-1zM468 330h1v1h-1zM468 331h1v1h-1zM468 341h1v1h-1zM468 342h1v1h-1zM468 350h1v1h-1zM468 353h1v1h-1zM468 361h1v1h-1zM468 362h1v1h-1zM468 366h1v1h-1zM468 368h1v1h-1zM468 369h1v1h-1zM468 370h1v1h-1zM468 371h1v1h-1zM468 372h1v1h-1zM468 373h1v1h-1zM468 378h1v1h-1zM468 380h1v1h-1zM468 383h1v1h-1zM468 389h1v1h-1zM468 391h1v1h-1zM468 394h1v1h-1zM468 395h1v1h-1zM468 399h1v1h-1zM468 404h1v1h-1zM468 405h1v1h-1zM468 409h1v1h-1zM468 414h1v1h-1zM468 415h1v1h-1zM468 419h1v1h-1zM468 420h1v1h-1zM468 425h1v1h-1zM468 426h1v1h-1zM468 429h1v1h-1zM468 435h1v1h-1zM468 439h1v1h-1zM468 440h1v1h-1zM468 445h1v1h-1zM468 446h1v1h-1zM468 450h1v1h-1zM468 452h1v1h-1zM468 453h1v1h-1zM468 456h1v1h-1zM468 459h1v1h-1zM468 460h1v1h-1zM468 462h1v1h-1zM468 463h1v1h-1zM468 464h1v1h-1zM468 470h1v1h-1zM468 471h1v1h-1zM468 473h1v1h-1zM468 474h1v1h-1zM468 476h1v1h-1zM468 480h1v1h-1zM468 482h1v1h-1zM468 483h1v1h-1zM468 485h1v1h-1zM468 491h1v1h-1zM468 493h1v1h-1zM468 494h1v1h-1zM468 501h1v1h-1zM468 503h1v1h-1zM468 504h1v1h-1zM468 512h1v1h-1zM468 514h1v1h-1zM468 515h1v1h-1zM469 320h1v1h-1zM469 321h1v1h-1zM469 329h1v1h-1zM469 332h1v1h-1zM469 340h1v1h-1zM469 341h1v1h-1zM469 342h1v1h-1zM469 343h1v1h-1zM469 349h1v1h-1zM469 351h1v1h-1zM469 352h1v1h-1zM469 354h1v1h-1zM469 360h1v1h-1zM469 362h1v1h-1zM469 363h1v1h-1zM469 369h1v1h-1zM469 370h1v1h-1zM469 373h1v1h-1zM469 374h1v1h-1zM469 378h1v1h-1zM469 379h1v1h-1zM469 384h1v1h-1zM469 389h1v1h-1zM469 390h1v1h-1zM469 395h1v1h-1zM469 399h1v1h-1zM469 405h1v1h-1zM469 409h1v1h-1zM469 414h1v1h-1zM469 415h1v1h-1zM469 419h1v1h-1zM469 420h1v1h-1zM469 424h1v1h-1zM469 426h1v1h-1zM469 429h1v1h-1zM469 434h1v1h-1zM469 439h1v1h-1zM469 440h1v1h-1zM469 444h1v1h-1zM469 445h1v1h-1zM469 450h1v1h-1zM469 455h1v1h-1zM469 460h1v1h-1zM469 462h1v1h-1zM469 463h1v1h-1zM469 470h1v1h-1zM469 475h1v1h-1zM469 481h1v1h-1zM469 483h1v1h-1zM469 484h1v1h-1zM470 270h1v1h-1zM470 271h1v1h-1zM470 291h1v1h-1zM470 292h1v1h-1zM470 299h1v1h-1zM470 300h1v1h-1zM470 310h1v1h-1zM470 311h1v1h-1zM470 319h1v1h-1zM470 321h1v1h-1zM470 322h1v1h-1zM470 328h1v1h-1zM470 331h1v1h-1zM470 332h1v1h-1zM470 333h1v1h-1zM470 339h1v1h-1zM470 340h1v1h-1zM470 343h1v1h-1zM470 344h1v1h-1zM470 349h1v1h-1zM470 350h1v1h-1zM470 353h1v1h-1zM470 355h1v1h-1zM470 359h1v1h-1zM470 361h1v1h-1zM470 364h1v1h-1zM470 366h1v1h-1zM470 367h1v1h-1zM470 369h1v1h-1zM470 374h1v1h-1zM470 375h1v1h-1zM470 378h1v1h-1zM470 379h1v1h-1zM470 384h1v1h-1zM470 385h1v1h-1zM470 389h1v1h-1zM470 390h1v1h-1zM470 394h1v1h-1zM470 396h1v1h-1zM470 399h1v1h-1zM470 404h1v1h-1zM470 405h1v1h-1zM470 409h1v1h-1zM470 410h1v1h-1zM470 412h1v1h-1zM470 413h1v1h-1zM470 415h1v1h-1zM470 420h1v1h-1zM470 422h1v1h-1zM470 423h1v1h-1zM470 425h1v1h-1zM470 430h1v1h-1zM470 432h1v1h-1zM470 433h1v1h-1zM470 440h1v1h-1zM470 441h1v1h-1zM470 442h1v1h-1zM470 443h1v1h-1zM470 444h1v1h-1zM470 451h1v1h-1zM470 453h1v1h-1zM470 454h1v1h-1zM470 471h1v1h-1zM470 473h1v1h-1zM470 474h1v1h-1zM471 269h1v1h-1zM471 272h1v1h-1zM471 280h1v1h-1zM471 281h1v1h-1zM471 290h1v1h-1zM471 293h1v1h-1zM471 298h1v1h-1zM471 300h1v1h-1zM471 301h1v1h-1zM471 309h1v1h-1zM471 310h1v1h-1zM471 311h1v1h-1zM471 312h1v1h-1zM471 318h1v1h-1zM471 320h1v1h-1zM471 323h1v1h-1zM471 328h1v1h-1zM471 330h1v1h-1zM471 333h1v1h-1zM471 334h1v1h-1zM471 339h1v1h-1zM471 344h1v1h-1zM471 345h1v1h-1zM471 349h1v1h-1zM471 354h1v1h-1zM471 355h1v1h-1zM471 359h1v1h-1zM471 360h1v1h-1zM471 365h1v1h-1zM471 368h1v1h-1zM471 369h1v1h-1zM471 375h1v1h-1zM471 378h1v1h-1zM471 379h1v1h-1zM471 383h1v1h-1zM471 385h1v1h-1zM471 390h1v1h-1zM471 392h1v1h-1zM471 393h1v1h-1zM471 396h1v1h-1zM471 399h1v1h-1zM471 400h1v1h-1zM471 402h1v1h-1zM471 403h1v1h-1zM471 404h1v1h-1zM471 409h1v1h-1zM471 414h1v1h-1zM471 421h1v1h-1zM471 423h1v1h-1zM471 424h1v1h-1zM472 229h1v1h-1zM472 230h1v1h-1zM472 236h1v1h-1zM472 237h1v1h-1zM472 241h1v1h-1zM472 242h1v1h-1zM472 244h1v1h-1zM472 245h1v1h-1zM472 250h1v1h-1zM472 251h1v1h-1zM472 260h1v1h-1zM472 261h1v1h-1zM472 268h1v1h-1zM472 271h1v1h-1zM472 272h1v1h-1zM472 273h1v1h-1zM472 279h1v1h-1zM472 280h1v1h-1zM472 281h1v1h-1zM472 282h1v1h-1zM472 289h1v1h-1zM472 291h1v1h-1zM472 292h1v1h-1zM472 294h1v1h-1zM472 297h1v1h-1zM472 299h1v1h-1zM472 302h1v1h-1zM472 308h1v1h-1zM472 309h1v1h-1zM472 312h1v1h-1zM472 313h1v1h-1zM472 318h1v1h-1zM472 319h1v1h-1zM472 324h1v1h-1zM472 328h1v1h-1zM472 329h1v1h-1zM472 334h1v1h-1zM472 339h1v1h-1zM472 345h1v1h-1zM472 349h1v1h-1zM472 354h1v1h-1zM472 355h1v1h-1zM472 359h1v1h-1zM472 360h1v1h-1zM472 364h1v1h-1zM472 365h1v1h-1zM472 366h1v1h-1zM472 369h1v1h-1zM472 374h1v1h-1zM472 375h1v1h-1zM472 379h1v1h-1zM472 381h1v1h-1zM472 382h1v1h-1zM472 384h1v1h-1zM472 390h1v1h-1zM472 395h1v1h-1zM472 400h1v1h-1zM472 402h1v1h-1zM472 403h1v1h-1zM472 410h1v1h-1zM472 412h1v1h-1zM472 413h1v1h-1zM473 220h1v1h-1zM473 221h1v1h-1zM473 228h1v1h-1zM473 231h1v1h-1zM473 235h1v1h-1zM473 236h1v1h-1zM473 237h1v1h-1zM473 238h1v1h-1zM473 240h1v1h-1zM473 243h1v1h-1zM473 245h1v1h-1zM473 246h1v1h-1zM473 249h1v1h-1zM473 250h1v1h-1zM473 251h1v1h-1zM473 252h1v1h-1zM473 259h1v1h-1zM473 260h1v1h-1zM473 261h1v1h-1zM473 262h1v1h-1zM473 268h1v1h-1zM473 270h1v1h-1zM473 273h1v1h-1zM473 274h1v1h-1zM473 278h1v1h-1zM473 279h1v1h-1zM473 282h1v1h-1zM473 283h1v1h-1zM473 289h1v1h-1zM473 290h1v1h-1zM473 293h1v1h-1zM473 295h1v1h-1zM473 297h1v1h-1zM473 298h1v1h-1zM473 303h1v1h-1zM473 308h1v1h-1zM473 313h1v1h-1zM473 314h1v1h-1zM473 318h1v1h-1zM473 319h1v1h-1zM473 324h1v1h-1zM473 325h1v1h-1zM473 328h1v1h-1zM473 329h1v1h-1zM473 333h1v1h-1zM473 335h1v1h-1zM473 339h1v1h-1zM473 344h1v1h-1zM473 345h1v1h-1zM473 349h1v1h-1zM473 350h1v1h-1zM473 352h1v1h-1zM473 353h1v1h-1zM473 355h1v1h-1zM473 359h1v1h-1zM473 360h1v1h-1zM473 364h1v1h-1zM473 366h1v1h-1zM473 369h1v1h-1zM473 370h1v1h-1zM473 372h1v1h-1zM473 373h1v1h-1zM473 374h1v1h-1zM473 380h1v1h-1zM473 382h1v1h-1zM473 383h1v1h-1zM473 391h1v1h-1zM473 393h1v1h-1zM473 394h1v1h-1zM474 212h1v1h-1zM474 213h1v1h-1zM474 219h1v1h-1zM474 221h1v1h-1zM474 222h1v1h-1zM474 227h1v1h-1zM474 230h1v1h-1zM474 231h1v1h-1zM474 232h1v1h-1zM474 234h1v1h-1zM474 235h1v1h-1zM474 238h1v1h-1zM474 239h1v1h-1zM474 241h1v1h-1zM474 242h1v1h-1zM474 244h1v1h-1zM474 247h1v1h-1zM474 248h1v1h-1zM474 249h1v1h-1zM474 252h1v1h-1zM474 253h1v1h-1zM474 258h1v1h-1zM474 259h1v1h-1zM474 262h1v1h-1zM474 263h1v1h-1zM474 268h1v1h-1zM474 269h1v1h-1zM474 274h1v1h-1zM474 278h1v1h-1zM474 283h1v1h-1zM474 284h1v1h-1zM474 289h1v1h-1zM474 294h1v1h-1zM474 295h1v1h-1zM474 297h1v1h-1zM474 298h1v1h-1zM474 303h1v1h-1zM474 304h1v1h-1zM474 308h1v1h-1zM474 314h1v1h-1zM474 318h1v1h-1zM474 319h1v1h-1zM474 323h1v1h-1zM474 325h1v1h-1zM474 329h1v1h-1zM474 331h1v1h-1zM474 332h1v1h-1zM474 335h1v1h-1zM474 339h1v1h-1zM474 340h1v1h-1zM474 342h1v1h-1zM474 343h1v1h-1zM474 344h1v1h-1zM474 349h1v1h-1zM474 354h1v1h-1zM474 360h1v1h-1zM474 362h1v1h-1zM474 363h1v1h-1zM474 364h1v1h-1zM474 365h1v1h-1zM474 370h1v1h-1zM474 372h1v1h-1zM474 373h1v1h-1zM475 211h1v1h-1zM475 214h1v1h-1zM475 218h1v1h-1zM475 220h1v1h-1zM475 223h1v1h-1zM475 227h1v1h-1zM475 229h1v1h-1zM475 232h1v1h-1zM475 233h1v1h-1zM475 234h1v1h-1zM475 239h1v1h-1zM475 240h1v1h-1zM475 242h1v1h-1zM475 243h1v1h-1zM475 245h1v1h-1zM475 248h1v1h-1zM475 253h1v1h-1zM475 254h1v1h-1zM475 258h1v1h-1zM475 263h1v1h-1zM475 264h1v1h-1zM475 268h1v1h-1zM475 269h1v1h-1zM475 273h1v1h-1zM475 275h1v1h-1zM475 278h1v1h-1zM475 284h1v1h-1zM475 289h1v1h-1zM475 294h1v1h-1zM475 295h1v1h-1zM475 297h1v1h-1zM475 298h1v1h-1zM475 302h1v1h-1zM475 304h1v1h-1zM475 308h1v1h-1zM475 313h1v1h-1zM475 314h1v1h-1zM475 319h1v1h-1zM475 321h1v1h-1zM475 322h1v1h-1zM475 324h1v1h-1zM475 329h1v1h-1zM475 334h1v1h-1zM475 340h1v1h-1zM475 342h1v1h-1zM475 343h1v1h-1zM475 350h1v1h-1zM475 352h1v1h-1zM475 353h1v1h-1zM475 361h1v1h-1zM475 363h1v1h-1zM475 364h1v1h-1zM475 369h1v1h-1zM476 210h1v1h-1zM476 215h1v1h-1zM476 218h1v1h-1zM476 219h1v1h-1zM476 224h1v1h-1zM476 227h1v1h-1zM476 228h1v1h-1zM476 233h1v1h-1zM476 234h1v1h-1zM476 239h1v1h-1zM476 240h1v1h-1zM476 242h1v1h-1zM476 243h1v1h-1zM476 244h1v1h-1zM476 245h1v1h-1zM476 248h1v1h-1zM476 249h1v1h-1zM476 254h1v1h-1zM476 258h1v1h-1zM476 264h1v1h-1zM476 269h1v1h-1zM476 271h1v1h-1zM476 272h1v1h-1zM476 275h1v1h-1zM476 278h1v1h-1zM476 283h1v1h-1zM476 284h1v1h-1zM476 289h1v1h-1zM476 290h1v1h-1zM476 292h1v1h-1zM476 293h1v1h-1zM476 295h1v1h-1zM476 298h1v1h-1zM476 300h1v1h-1zM476 301h1v1h-1zM476 303h1v1h-1zM476 308h1v1h-1zM476 309h1v1h-1zM476 311h1v1h-1zM476 312h1v1h-1zM476 313h1v1h-1zM476 320h1v1h-1zM476 322h1v1h-1zM476 323h1v1h-1zM476 330h1v1h-1zM476 332h1v1h-1zM476 333h1v1h-1zM476 365h1v1h-1zM476 367h1v1h-1zM476 368h1v1h-1zM477 210h1v1h-1zM477 216h1v1h-1zM477 218h1v1h-1zM477 219h1v1h-1zM477 224h1v1h-1zM477 225h1v1h-1zM477 227h1v1h-1zM477 228h1v1h-1zM477 232h1v1h-1zM477 234h1v1h-1zM477 239h1v1h-1zM477 240h1v1h-1zM477 242h1v1h-1zM477 243h1v1h-1zM477 244h1v1h-1zM477 245h1v1h-1zM477 247h1v1h-1zM477 248h1v1h-1zM477 249h1v1h-1zM477 253h1v1h-1zM477 254h1v1h-1zM477 258h1v1h-1zM477 263h1v1h-1zM477 264h1v1h-1zM477 269h1v1h-1zM477 274h1v1h-1zM477 278h1v1h-1zM477 279h1v1h-1zM477 281h1v1h-1zM477 282h1v1h-1zM477 283h1v1h-1zM477 289h1v1h-1zM477 294h1v1h-1zM477 299h1v1h-1zM477 301h1v1h-1zM477 302h1v1h-1zM477 309h1v1h-1zM477 311h1v1h-1zM477 312h1v1h-1zM478 210h1v1h-1zM478 216h1v1h-1zM478 218h1v1h-1zM478 219h1v1h-1zM478 223h1v1h-1zM478 225h1v1h-1zM478 228h1v1h-1zM478 230h1v1h-1zM478 231h1v1h-1zM478 234h1v1h-1zM478 235h1v1h-1zM478 237h1v1h-1zM478 238h1v1h-1zM478 239h1v1h-1zM478 240h1v1h-1zM478 242h1v1h-1zM478 243h1v1h-1zM478 245h1v1h-1zM478 246h1v1h-1zM478 248h1v1h-1zM478 249h1v1h-1zM478 251h1v1h-1zM478 252h1v1h-1zM478 253h1v1h-1zM478 258h1v1h-1zM478 259h1v1h-1zM478 261h1v1h-1zM478 262h1v1h-1zM478 263h1v1h-1zM478 270h1v1h-1zM478 272h1v1h-1zM478 273h1v1h-1zM478 279h1v1h-1zM478 281h1v1h-1zM478 282h1v1h-1zM478 290h1v1h-1zM478 292h1v1h-1zM478 293h1v1h-1zM479 210h1v1h-1zM479 215h1v1h-1zM479 219h1v1h-1zM479 221h1v1h-1zM479 222h1v1h-1zM479 224h1v1h-1zM479 228h1v1h-1zM479 233h1v1h-1zM479 235h1v1h-1zM479 237h1v1h-1zM479 238h1v1h-1zM479 239h1v1h-1zM479 244h1v1h-1zM479 246h1v1h-1zM479 247h1v1h-1zM479 249h1v1h-1zM479 251h1v1h-1zM479 252h1v1h-1zM479 259h1v1h-1zM479 261h1v1h-1zM479 262h1v1h-1zM480 211h1v1h-1zM480 213h1v1h-1zM480 214h1v1h-1zM480 220h1v1h-1zM480 222h1v1h-1zM480 223h1v1h-1zM480 229h1v1h-1zM480 231h1v1h-1zM480 232h1v1h-1zM480 240h1v1h-1zM480 242h1v1h-1zM480 243h1v1h-1zM561 646h1v1h-1zM561 647h1v1h-1zM562 636h1v1h-1zM562 637h1v1h-1zM562 645h1v1h-1zM562 648h1v1h-1zM563 616h1v1h-1zM563 617h1v1h-1zM563 620h1v1h-1zM563 621h1v1h-1zM563 628h1v1h-1zM563 629h1v1h-1zM563 635h1v1h-1zM563 637h1v1h-1zM563 638h1v1h-1zM563 644h1v1h-1zM563 647h1v1h-1zM563 648h1v1h-1zM563 649h1v1h-1zM564 596h1v1h-1zM564 597h1v1h-1zM564 607h1v1h-1zM564 608h1v1h-1zM564 615h1v1h-1zM564 618h1v1h-1zM564 619h1v1h-1zM564 621h1v1h-1zM564 622h1v1h-1zM564 627h1v1h-1zM564 628h1v1h-1zM564 629h1v1h-1zM564 630h1v1h-1zM564 634h1v1h-1zM564 636h1v1h-1zM564 639h1v1h-1zM564 644h1v1h-1zM564 646h1v1h-1zM564 649h1v1h-1zM564 650h1v1h-1zM565 556h1v1h-1zM565 557h1v1h-1zM565 578h1v1h-1zM565 579h1v1h-1zM565 587h1v1h-1zM565 588h1v1h-1zM565 595h1v1h-1zM565 598h1v1h-1zM565 606h1v1h-1zM565 607h1v1h-1zM565 608h1v1h-1zM565 609h1v1h-1zM565 614h1v1h-1zM565 616h1v1h-1zM565 617h1v1h-1zM565 618h1v1h-1zM565 619h1v1h-1zM565 620h1v1h-1zM565 623h1v1h-1zM565 626h1v1h-1zM565 627h1v1h-1zM565 630h1v1h-1zM565 631h1v1h-1zM565 634h1v1h-1zM565 635h1v1h-1zM565 640h1v1h-1zM565 644h1v1h-1zM565 645h1v1h-1zM565 650h1v1h-1zM566 536h1v1h-1zM566 537h1v1h-1zM566 546h1v1h-1zM566 547h1v1h-1zM566 555h1v1h-1zM566 558h1v1h-1zM566 566h1v1h-1zM566 567h1v1h-1zM566 568h1v1h-1zM566 577h1v1h-1zM566 578h1v1h-1zM566 579h1v1h-1zM566 580h1v1h-1zM566 586h1v1h-1zM566 588h1v1h-1zM566 589h1v1h-1zM566 594h1v1h-1zM566 598h1v1h-1zM566 599h1v1h-1zM566 605h1v1h-1zM566 606h1v1h-1zM566 609h1v1h-1zM566 610h1v1h-1zM566 614h1v1h-1zM566 615h1v1h-1zM566 618h1v1h-1zM566 619h1v1h-1zM566 620h1v1h-1zM566 624h1v1h-1zM566 626h1v1h-1zM566 631h1v1h-1zM566 632h1v1h-1zM566 634h1v1h-1zM566 635h1v1h-1zM566 640h1v1h-1zM566 641h1v1h-1zM566 644h1v1h-1zM566 645h1v1h-1zM566 649h1v1h-1zM566 651h1v1h-1zM567 516h1v1h-1zM567 517h1v1h-1zM567 526h1v1h-1zM567 527h1v1h-1zM567 535h1v1h-1zM567 538h1v1h-1zM567 545h1v1h-1zM567 546h1v1h-1zM567 547h1v1h-1zM567 548h1v1h-1zM567 554h1v1h-1zM567 556h1v1h-1zM567 557h1v1h-1zM567 559h1v1h-1zM567 565h1v1h-1zM567 566h1v1h-1zM567 568h1v1h-1zM567 569h1v1h-1zM567 576h1v1h-1zM567 577h1v1h-1zM567 580h1v1h-1zM567 581h1v1h-1zM567 585h1v1h-1zM567 587h1v1h-1zM567 590h1v1h-1zM567 594h1v1h-1zM567 597h1v1h-1zM567 600h1v1h-1zM567 605h1v1h-1zM567 610h1v1h-1zM567 611h1v1h-1zM567 614h1v1h-1zM567 618h1v1h-1zM567 619h1v1h-1zM567 620h1v1h-1zM567 624h1v1h-1zM567 625h1v1h-1zM567 626h1v1h-1zM567 632h1v1h-1zM567 634h1v1h-1zM567 635h1v1h-1zM567 639h1v1h-1zM567 641h1v1h-1zM567 645h1v1h-1zM567 647h1v1h-1zM567 648h1v1h-1zM567 651h1v1h-1zM568 496h1v1h-1zM568 497h1v1h-1zM568 506h1v1h-1zM568 507h1v1h-1zM568 515h1v1h-1zM568 516h1v1h-1zM568 517h1v1h-1zM568 518h1v1h-1zM568 525h1v1h-1zM568 527h1v1h-1zM568 528h1v1h-1zM568 534h1v1h-1zM568 537h1v1h-1zM568 538h1v1h-1zM568 539h1v1h-1zM568 544h1v1h-1zM568 545h1v1h-1zM568 548h1v1h-1zM568 549h1v1h-1zM568 554h1v1h-1zM568 555h1v1h-1zM568 558h1v1h-1zM568 560h1v1h-1zM568 564h1v1h-1zM568 565h1v1h-1zM568 569h1v1h-1zM568 570h1v1h-1zM568 576h1v1h-1zM568 581h1v1h-1zM568 582h1v1h-1zM568 585h1v1h-1zM568 586h1v1h-1zM568 591h1v1h-1zM568 594h1v1h-1zM568 596h1v1h-1zM568 600h1v1h-1zM568 601h1v1h-1zM568 605h1v1h-1zM568 611h1v1h-1zM568 614h1v1h-1zM568 618h1v1h-1zM568 619h1v1h-1zM568 620h1v1h-1zM568 623h1v1h-1zM568 625h1v1h-1zM568 626h1v1h-1zM568 631h1v1h-1zM568 632h1v1h-1zM568 635h1v1h-1zM568 637h1v1h-1zM568 638h1v1h-1zM568 640h1v1h-1zM568 645h1v1h-1zM568 650h1v1h-1zM569 476h1v1h-1zM569 477h1v1h-1zM569 486h1v1h-1zM569 487h1v1h-1zM569 495h1v1h-1zM569 498h1v1h-1zM569 505h1v1h-1zM569 507h1v1h-1zM569 508h1v1h-1zM569 514h1v1h-1zM569 515h1v1h-1zM569 518h1v1h-1zM569 519h1v1h-1zM569 524h1v1h-1zM569 526h1v1h-1zM569 529h1v1h-1zM569 534h1v1h-1zM569 536h1v1h-1zM569 539h1v1h-1zM569 540h1v1h-1zM569 544h1v1h-1zM569 549h1v1h-1zM569 550h1v1h-1zM569 554h1v1h-1zM569 559h1v1h-1zM569 560h1v1h-1zM569 564h1v1h-1zM569 565h1v1h-1zM569 570h1v1h-1zM569 571h1v1h-1zM569 576h1v1h-1zM569 582h1v1h-1zM569 585h1v1h-1zM569 586h1v1h-1zM569 591h1v1h-1zM569 592h1v1h-1zM569 594h1v1h-1zM569 596h1v1h-1zM569 599h1v1h-1zM569 602h1v1h-1zM569 605h1v1h-1zM569 610h1v1h-1zM569 611h1v1h-1zM569 614h1v1h-1zM569 615h1v1h-1zM569 617h1v1h-1zM569 618h1v1h-1zM569 619h1v1h-1zM569 620h1v1h-1zM569 621h1v1h-1zM569 622h1v1h-1zM569 624h1v1h-1zM569 626h1v1h-1zM569 627h1v1h-1zM569 629h1v1h-1zM569 630h1v1h-1zM569 631h1v1h-1zM569 636h1v1h-1zM569 638h1v1h-1zM569 639h1v1h-1zM569 646h1v1h-1zM569 648h1v1h-1zM569 649h1v1h-1zM570 370h1v1h-1zM570 371h1v1h-1zM570 445h1v1h-1zM570 446h1v1h-1zM570 457h1v1h-1zM570 458h1v1h-1zM570 466h1v1h-1zM570 467h1v1h-1zM570 475h1v1h-1zM570 476h1v1h-1zM570 477h1v1h-1zM570 478h1v1h-1zM570 485h1v1h-1zM570 487h1v1h-1zM570 488h1v1h-1zM570 494h1v1h-1zM570 497h1v1h-1zM570 498h1v1h-1zM570 499h1v1h-1zM570 504h1v1h-1zM570 506h1v1h-1zM570 509h1v1h-1zM570 514h1v1h-1zM570 519h1v1h-1zM570 520h1v1h-1zM570 524h1v1h-1zM570 525h1v1h-1zM570 530h1v1h-1zM570 534h1v1h-1zM570 535h1v1h-1zM570 540h1v1h-1zM570 544h1v1h-1zM570 550h1v1h-1zM570 554h1v1h-1zM570 559h1v1h-1zM570 560h1v1h-1zM570 564h1v1h-1zM570 565h1v1h-1zM570 570h1v1h-1zM570 571h1v1h-1zM570 576h1v1h-1zM570 581h1v1h-1zM570 582h1v1h-1zM570 585h1v1h-1zM570 586h1v1h-1zM570 590h1v1h-1zM570 592h1v1h-1zM570 595h1v1h-1zM570 596h1v1h-1zM570 597h1v1h-1zM570 598h1v1h-1zM570 602h1v1h-1zM570 605h1v1h-1zM570 606h1v1h-1zM570 608h1v1h-1zM570 609h1v1h-1zM570 610h1v1h-1zM570 614h1v1h-1zM570 619h1v1h-1zM570 620h1v1h-1zM570 622h1v1h-1zM570 623h1v1h-1zM570 627h1v1h-1zM570 629h1v1h-1zM570 630h1v1h-1zM571 369h1v1h-1zM571 371h1v1h-1zM571 372h1v1h-1zM571 435h1v1h-1zM571 436h1v1h-1zM571 444h1v1h-1zM571 445h1v1h-1zM571 446h1v1h-1zM571 447h1v1h-1zM571 456h1v1h-1zM571 459h1v1h-1zM571 465h1v1h-1zM571 467h1v1h-1zM571 468h1v1h-1zM571 474h1v1h-1zM571 475h1v1h-1zM571 478h1v1h-1zM571 479h1v1h-1zM571 484h1v1h-1zM571 486h1v1h-1zM571 489h1v1h-1zM571 494h1v1h-1zM571 496h1v1h-1zM571 499h1v1h-1zM571 500h1v1h-1zM571 504h1v1h-1zM571 505h1v1h-1zM571 510h1v1h-1zM571 514h1v1h-1zM571 520h1v1h-1zM571 524h1v1h-1zM571 525h1v1h-1zM571 530h1v1h-1zM571 531h1v1h-1zM571 534h1v1h-1zM571 535h1v1h-1zM571 539h1v1h-1zM571 541h1v1h-1zM571 544h1v1h-1zM571 549h1v1h-1zM571 550h1v1h-1zM571 554h1v1h-1zM571 555h1v1h-1zM571 557h1v1h-1zM571 558h1v1h-1zM571 560h1v1h-1zM571 564h1v1h-1zM571 565h1v1h-1zM571 569h1v1h-1zM571 570h1v1h-1zM571 576h1v1h-1zM571 577h1v1h-1zM571 579h1v1h-1zM571 580h1v1h-1zM571 581h1v1h-1zM571 586h1v1h-1zM571 588h1v1h-1zM571 589h1v1h-1zM571 591h1v1h-1zM571 596h1v1h-1zM571 601h1v1h-1zM571 606h1v1h-1zM571 608h1v1h-1zM571 609h1v1h-1zM571 615h1v1h-1zM571 617h1v1h-1zM571 618h1v1h-1zM572 368h1v1h-1zM572 370h1v1h-1zM572 373h1v1h-1zM572 396h1v1h-1zM572 397h1v1h-1zM572 405h1v1h-1zM572 406h1v1h-1zM572 416h1v1h-1zM572 417h1v1h-1zM572 426h1v1h-1zM572 427h1v1h-1zM572 428h1v1h-1zM572 434h1v1h-1zM572 437h1v1h-1zM572 443h1v1h-1zM572 444h1v1h-1zM572 447h1v1h-1zM572 448h1v1h-1zM572 455h1v1h-1zM572 457h1v1h-1zM572 458h1v1h-1zM572 460h1v1h-1zM572 464h1v1h-1zM572 466h1v1h-1zM572 469h1v1h-1zM572 474h1v1h-1zM572 479h1v1h-1zM572 480h1v1h-1zM572 484h1v1h-1zM572 485h1v1h-1zM572 490h1v1h-1zM572 494h1v1h-1zM572 495h1v1h-1zM572 500h1v1h-1zM572 504h1v1h-1zM572 505h1v1h-1zM572 510h1v1h-1zM572 511h1v1h-1zM572 514h1v1h-1zM572 519h1v1h-1zM572 520h1v1h-1zM572 524h1v1h-1zM572 525h1v1h-1zM572 529h1v1h-1zM572 531h1v1h-1zM572 535h1v1h-1zM572 537h1v1h-1zM572 538h1v1h-1zM572 541h1v1h-1zM572 544h1v1h-1zM572 545h1v1h-1zM572 547h1v1h-1zM572 548h1v1h-1zM572 549h1v1h-1zM572 554h1v1h-1zM572 559h1v1h-1zM572 565h1v1h-1zM572 566h1v1h-1zM572 567h1v1h-1zM572 568h1v1h-1zM572 569h1v1h-1zM572 577h1v1h-1zM572 579h1v1h-1zM572 580h1v1h-1zM572 587h1v1h-1zM572 589h1v1h-1zM572 590h1v1h-1zM572 597h1v1h-1zM572 599h1v1h-1zM572 600h1v1h-1zM573 365h1v1h-1zM573 366h1v1h-1zM573 368h1v1h-1zM573 369h1v1h-1zM573 374h1v1h-1zM573 376h1v1h-1zM573 377h1v1h-1zM573 386h1v1h-1zM573 387h1v1h-1zM573 395h1v1h-1zM573 398h1v1h-1zM573 404h1v1h-1zM573 407h1v1h-1zM573 415h1v1h-1zM573 416h1v1h-1zM573 417h1v1h-1zM573 418h1v1h-1zM573 425h1v1h-1zM573 426h1v1h-1zM573 428h1v1h-1zM573 429h1v1h-1zM573 433h1v1h-1zM573 436h1v1h-1zM573 437h1v1h-1zM573 438h1v1h-1zM573 443h1v1h-1zM573 448h1v1h-1zM573 449h1v1h-1zM573 455h1v1h-1zM573 456h1v1h-1zM573 459h1v1h-1zM573 461h1v1h-1zM573 464h1v1h-1zM573 465h1v1h-1zM573 470h1v1h-1zM573 474h1v1h-1zM573 480h1v1h-1zM573 484h1v1h-1zM573 485h1v1h-1zM573 490h1v1h-1zM573 491h1v1h-1zM573 494h1v1h-1zM573 495h1v1h-1zM573 499h1v1h-1zM573 501h1v1h-1zM573 504h1v1h-1zM573 505h1v1h-1zM573 509h1v1h-1zM573 511h1v1h-1zM573 514h1v1h-1zM573 515h1v1h-1zM573 517h1v1h-1zM573 518h1v1h-1zM573 519h1v1h-1zM573 525h1v1h-1zM573 527h1v1h-1zM573 528h1v1h-1zM573 530h1v1h-1zM573 535h1v1h-1zM573 540h1v1h-1zM573 545h1v1h-1zM573 547h1v1h-1zM573 548h1v1h-1zM573 555h1v1h-1zM573 557h1v1h-1zM573 558h1v1h-1zM574 345h1v1h-1zM574 346h1v1h-1zM574 355h1v1h-1zM574 356h1v1h-1zM574 364h1v1h-1zM574 367h1v1h-1zM574 368h1v1h-1zM574 369h1v1h-1zM574 374h1v1h-1zM574 375h1v1h-1zM574 376h1v1h-1zM574 377h1v1h-1zM574 378h1v1h-1zM574 385h1v1h-1zM574 386h1v1h-1zM574 387h1v1h-1zM574 388h1v1h-1zM574 394h1v1h-1zM574 396h1v1h-1zM574 397h1v1h-1zM574 399h1v1h-1zM574 403h1v1h-1zM574 406h1v1h-1zM574 407h1v1h-1zM574 408h1v1h-1zM574 414h1v1h-1zM574 415h1v1h-1zM574 418h1v1h-1zM574 419h1v1h-1zM574 424h1v1h-1zM574 425h1v1h-1zM574 429h1v1h-1zM574 430h1v1h-1zM574 433h1v1h-1zM574 435h1v1h-1zM574 438h1v1h-1zM574 439h1v1h-1zM574 443h1v1h-1zM574 449h1v1h-1zM574 455h1v1h-1zM574 460h1v1h-1zM574 461h1v1h-1zM574 464h1v1h-1zM574 465h1v1h-1zM574 470h1v1h-1zM574 471h1v1h-1zM574 474h1v1h-1zM574 479h1v1h-1zM574 480h1v1h-1zM574 484h1v1h-1zM574 485h1v1h-1zM574 489h1v1h-1zM574 491h1v1h-1zM574 492h1v1h-1zM574 495h1v1h-1zM574 497h1v1h-1zM574 498h1v1h-1zM574 501h1v1h-1zM574 505h1v1h-1zM574 507h1v1h-1zM574 508h1v1h-1zM574 510h1v1h-1zM574 515h1v1h-1zM574 517h1v1h-1zM574 518h1v1h-1zM574 526h1v1h-1zM574 528h1v1h-1zM574 529h1v1h-1zM574 536h1v1h-1zM574 538h1v1h-1zM574 539h1v1h-1zM575 334h1v1h-1zM575 335h1v1h-1zM575 344h1v1h-1zM575 347h1v1h-1zM575 354h1v1h-1zM575 357h1v1h-1zM575 363h1v1h-1zM575 365h1v1h-1zM575 366h1v1h-1zM575 368h1v1h-1zM575 369h1v1h-1zM575 373h1v1h-1zM575 374h1v1h-1zM575 375h1v1h-1zM575 378h1v1h-1zM575 379h1v1h-1zM575 384h1v1h-1zM575 385h1v1h-1zM575 388h1v1h-1zM575 389h1v1h-1zM575 394h1v1h-1zM575 395h1v1h-1zM575 398h1v1h-1zM575 400h1v1h-1zM575 403h1v1h-1zM575 405h1v1h-1zM575 408h1v1h-1zM575 409h1v1h-1zM575 414h1v1h-1zM575 419h1v1h-1zM575 420h1v1h-1zM575 424h1v1h-1zM575 425h1v1h-1zM575 430h1v1h-1zM575 431h1v1h-1zM575 433h1v1h-1zM575 434h1v1h-1zM575 439h1v1h-1zM575 443h1v1h-1zM575 448h1v1h-1zM575 449h1v1h-1zM575 455h1v1h-1zM575 460h1v1h-1zM575 461h1v1h-1zM575 464h1v1h-1zM575 465h1v1h-1zM575 469h1v1h-1zM575 471h1v1h-1zM575 474h1v1h-1zM575 475h1v1h-1zM575 477h1v1h-1zM575 478h1v1h-1zM575 479h1v1h-1zM575 485h1v1h-1zM575 487h1v1h-1zM575 488h1v1h-1zM575 490h1v1h-1zM575 493h1v1h-1zM575 495h1v1h-1zM575 500h1v1h-1zM575 506h1v1h-1zM575 508h1v1h-1zM575 509h1v1h-1zM576 305h1v1h-1zM576 306h1v1h-1zM576 314h1v1h-1zM576 315h1v1h-1zM576 324h1v1h-1zM576 325h1v1h-1zM576 333h1v1h-1zM576 335h1v1h-1zM576 336h1v1h-1zM576 343h1v1h-1zM576 346h1v1h-1zM576 347h1v1h-1zM576 348h1v1h-1zM576 353h1v1h-1zM576 355h1v1h-1zM576 356h1v1h-1zM576 358h1v1h-1zM576 363h1v1h-1zM576 364h1v1h-1zM576 367h1v1h-1zM576 369h1v1h-1zM576 371h1v1h-1zM576 372h1v1h-1zM576 374h1v1h-1zM576 379h1v1h-1zM576 380h1v1h-1zM576 384h1v1h-1zM576 389h1v1h-1zM576 390h1v1h-1zM576 394h1v1h-1zM576 399h1v1h-1zM576 400h1v1h-1zM576 403h1v1h-1zM576 404h1v1h-1zM576 409h1v1h-1zM576 414h1v1h-1zM576 420h1v1h-1zM576 424h1v1h-1zM576 425h1v1h-1zM576 430h1v1h-1zM576 431h1v1h-1zM576 433h1v1h-1zM576 434h1v1h-1zM576 438h1v1h-1zM576 440h1v1h-1zM576 443h1v1h-1zM576 444h1v1h-1zM576 446h1v1h-1zM576 447h1v1h-1zM576 448h1v1h-1zM576 455h1v1h-1zM576 456h1v1h-1zM576 458h1v1h-1zM576 459h1v1h-1zM576 461h1v1h-1zM576 465h1v1h-1zM576 467h1v1h-1zM576 468h1v1h-1zM576 470h1v1h-1zM576 475h1v1h-1zM576 477h1v1h-1zM576 478h1v1h-1zM576 486h1v1h-1zM576 488h1v1h-1zM576 489h1v1h-1zM576 491h1v1h-1zM576 492h1v1h-1zM576 494h1v1h-1zM576 496h1v1h-1zM576 498h1v1h-1zM576 499h1v1h-1zM577 284h1v1h-1zM577 285h1v1h-1zM577 304h1v1h-1zM577 307h1v1h-1zM577 313h1v1h-1zM577 316h1v1h-1zM577 323h1v1h-1zM577 324h1v1h-1zM577 325h1v1h-1zM577 326h1v1h-1zM577 332h1v1h-1zM577 334h1v1h-1zM577 337h1v1h-1zM577 343h1v1h-1zM577 345h1v1h-1zM577 348h1v1h-1zM577 349h1v1h-1zM577 353h1v1h-1zM577 354h1v1h-1zM577 357h1v1h-1zM577 359h1v1h-1zM577 363h1v1h-1zM577 368h1v1h-1zM577 369h1v1h-1zM577 370h1v1h-1zM577 372h1v1h-1zM577 373h1v1h-1zM577 374h1v1h-1zM577 380h1v1h-1zM577 384h1v1h-1zM577 390h1v1h-1zM577 394h1v1h-1zM577 399h1v1h-1zM577 400h1v1h-1zM577 403h1v1h-1zM577 404h1v1h-1zM577 408h1v1h-1zM577 410h1v1h-1zM577 414h1v1h-1zM577 419h1v1h-1zM577 420h1v1h-1zM577 424h1v1h-1zM577 425h1v1h-1zM577 429h1v1h-1zM577 430h1v1h-1zM577 434h1v1h-1zM577 436h1v1h-1zM577 437h1v1h-1zM577 440h1v1h-1zM577 444h1v1h-1zM577 446h1v1h-1zM577 447h1v1h-1zM577 455h1v1h-1zM577 460h1v1h-1zM577 466h1v1h-1zM577 468h1v1h-1zM577 469h1v1h-1zM577 489h1v1h-1zM577 490h1v1h-1zM577 493h1v1h-1zM577 495h1v1h-1zM578 274h1v1h-1zM578 275h1v1h-1zM578 283h1v1h-1zM578 286h1v1h-1zM578 295h1v1h-1zM578 296h1v1h-1zM578 303h1v1h-1zM578 305h1v1h-1zM578 306h1v1h-1zM578 308h1v1h-1zM578 312h1v1h-1zM578 315h1v1h-1zM578 316h1v1h-1zM578 317h1v1h-1zM578 322h1v1h-1zM578 323h1v1h-1zM578 326h1v1h-1zM578 327h1v1h-1zM578 332h1v1h-1zM578 333h1v1h-1zM578 338h1v1h-1zM578 343h1v1h-1zM578 344h1v1h-1zM578 349h1v1h-1zM578 353h1v1h-1zM578 358h1v1h-1zM578 359h1v1h-1zM578 363h1v1h-1zM578 368h1v1h-1zM578 369h1v1h-1zM578 374h1v1h-1zM578 379h1v1h-1zM578 380h1v1h-1zM578 384h1v1h-1zM578 389h1v1h-1zM578 390h1v1h-1zM578 394h1v1h-1zM578 395h1v1h-1zM578 397h1v1h-1zM578 398h1v1h-1zM578 400h1v1h-1zM578 404h1v1h-1zM578 406h1v1h-1zM578 407h1v1h-1zM578 410h1v1h-1zM578 414h1v1h-1zM578 415h1v1h-1zM578 417h1v1h-1zM578 418h1v1h-1zM578 419h1v1h-1zM578 425h1v1h-1zM578 426h1v1h-1zM578 427h1v1h-1zM578 428h1v1h-1zM578 429h1v1h-1zM578 434h1v1h-1zM578 439h1v1h-1zM578 456h1v1h-1zM578 458h1v1h-1zM578 459h1v1h-1zM578 489h1v1h-1zM578 494h1v1h-1zM578 495h1v1h-1zM578 719h1v1h-1zM578 720h1v1h-1zM578 729h1v1h-1zM578 730h1v1h-1zM579 244h1v1h-1zM579 245h1v1h-1zM579 254h1v1h-1zM579 255h1v1h-1zM579 264h1v1h-1zM579 265h1v1h-1zM579 273h1v1h-1zM579 275h1v1h-1zM579 276h1v1h-1zM579 282h1v1h-1zM579 285h1v1h-1zM579 286h1v1h-1zM579 287h1v1h-1zM579 294h1v1h-1zM579 297h1v1h-1zM579 303h1v1h-1zM579 304h1v1h-1zM579 307h1v1h-1zM579 309h1v1h-1zM579 312h1v1h-1zM579 314h1v1h-1zM579 317h1v1h-1zM579 318h1v1h-1zM579 322h1v1h-1zM579 327h1v1h-1zM579 328h1v1h-1zM579 332h1v1h-1zM579 333h1v1h-1zM579 338h1v1h-1zM579 339h1v1h-1zM579 343h1v1h-1zM579 344h1v1h-1zM579 348h1v1h-1zM579 350h1v1h-1zM579 353h1v1h-1zM579 358h1v1h-1zM579 359h1v1h-1zM579 363h1v1h-1zM579 364h1v1h-1zM579 366h1v1h-1zM579 367h1v1h-1zM579 369h1v1h-1zM579 374h1v1h-1zM579 375h1v1h-1zM579 377h1v1h-1zM579 378h1v1h-1zM579 379h1v1h-1zM579 384h1v1h-1zM579 385h1v1h-1zM579 387h1v1h-1zM579 388h1v1h-1zM579 389h1v1h-1zM579 394h1v1h-1zM579 399h1v1h-1zM579 404h1v1h-1zM579 409h1v1h-1zM579 415h1v1h-1zM579 417h1v1h-1zM579 418h1v1h-1zM579 435h1v1h-1zM579 437h1v1h-1zM579 438h1v1h-1zM579 487h1v1h-1zM579 488h1v1h-1zM579 489h1v1h-1zM579 494h1v1h-1zM579 495h1v1h-1zM579 698h1v1h-1zM579 699h1v1h-1zM579 708h1v1h-1zM579 709h1v1h-1zM579 718h1v1h-1zM579 721h1v1h-1zM579 728h1v1h-1zM579 731h1v1h-1zM580 225h1v1h-1zM580 226h1v1h-1zM580 235h1v1h-1zM580 236h1v1h-1zM580 243h1v1h-1zM580 246h1v1h-1zM580 253h1v1h-1zM580 256h1v1h-1zM580 257h1v1h-1zM580 263h1v1h-1zM580 264h1v1h-1zM580 265h1v1h-1zM580 266h1v1h-1zM580 272h1v1h-1zM580 274h1v1h-1zM580 277h1v1h-1zM580 282h1v1h-1zM580 284h1v1h-1zM580 287h1v1h-1zM580 288h1v1h-1zM580 293h1v1h-1zM580 298h1v1h-1zM580 303h1v1h-1zM580 308h1v1h-1zM580 309h1v1h-1zM580 312h1v1h-1zM580 313h1v1h-1zM580 318h1v1h-1zM580 322h1v1h-1zM580 328h1v1h-1zM580 332h1v1h-1zM580 333h1v1h-1zM580 337h1v1h-1zM580 339h1v1h-1zM580 344h1v1h-1zM580 346h1v1h-1zM580 347h1v1h-1zM580 350h1v1h-1zM580 353h1v1h-1zM580 354h1v1h-1zM580 356h1v1h-1zM580 357h1v1h-1zM580 359h1v1h-1zM580 363h1v1h-1zM580 368h1v1h-1zM580 375h1v1h-1zM580 377h1v1h-1zM580 378h1v1h-1zM580 385h1v1h-1zM580 387h1v1h-1zM580 388h1v1h-1zM580 395h1v1h-1zM580 397h1v1h-1zM580 398h1v1h-1zM580 405h1v1h-1zM580 407h1v1h-1zM580 408h1v1h-1zM580 486h1v1h-1zM580 489h1v1h-1zM580 490h1v1h-1zM580 492h1v1h-1zM580 493h1v1h-1zM580 495h1v1h-1zM580 679h1v1h-1zM580 680h1v1h-1zM580 689h1v1h-1zM580 690h1v1h-1zM580 697h1v1h-1zM580 700h1v1h-1zM580 707h1v1h-1zM580 710h1v1h-1zM580 717h1v1h-1zM580 722h1v1h-1zM580 727h1v1h-1zM580 732h1v1h-1zM581 217h1v1h-1zM581 218h1v1h-1zM581 224h1v1h-1zM581 227h1v1h-1zM581 234h1v1h-1zM581 235h1v1h-1zM581 236h1v1h-1zM581 237h1v1h-1zM581 242h1v1h-1zM581 244h1v1h-1zM581 245h1v1h-1zM581 247h1v1h-1zM581 252h1v1h-1zM581 255h1v1h-1zM581 257h1v1h-1zM581 258h1v1h-1zM581 262h1v1h-1zM581 263h1v1h-1zM581 266h1v1h-1zM581 267h1v1h-1zM581 272h1v1h-1zM581 273h1v1h-1zM581 278h1v1h-1zM581 282h1v1h-1zM581 283h1v1h-1zM581 288h1v1h-1zM581 293h1v1h-1zM581 299h1v1h-1zM581 303h1v1h-1zM581 308h1v1h-1zM581 309h1v1h-1zM581 312h1v1h-1zM581 313h1v1h-1zM581 317h1v1h-1zM581 319h1v1h-1zM581 322h1v1h-1zM581 327h1v1h-1zM581 328h1v1h-1zM581 333h1v1h-1zM581 335h1v1h-1zM581 336h1v1h-1zM581 338h1v1h-1zM581 344h1v1h-1zM581 349h1v1h-1zM581 353h1v1h-1zM581 358h1v1h-1zM581 364h1v1h-1zM581 366h1v1h-1zM581 367h1v1h-1zM581 376h1v1h-1zM581 377h1v1h-1zM581 485h1v1h-1zM581 487h1v1h-1zM581 488h1v1h-1zM581 489h1v1h-1zM581 490h1v1h-1zM581 494h1v1h-1zM581 649h1v1h-1zM581 650h1v1h-1zM581 659h1v1h-1zM581 660h1v1h-1zM581 669h1v1h-1zM581 670h1v1h-1zM581 678h1v1h-1zM581 681h1v1h-1zM581 688h1v1h-1zM581 691h1v1h-1zM581 696h1v1h-1zM581 701h1v1h-1zM581 706h1v1h-1zM581 711h1v1h-1zM581 717h1v1h-1zM581 723h1v1h-1zM581 727h1v1h-1zM581 733h1v1h-1zM582 216h1v1h-1zM582 218h1v1h-1zM582 219h1v1h-1zM582 223h1v1h-1zM582 226h1v1h-1zM582 227h1v1h-1zM582 228h1v1h-1zM582 233h1v1h-1zM582 234h1v1h-1zM582 237h1v1h-1zM582 238h1v1h-1zM582 242h1v1h-1zM582 243h1v1h-1zM582 246h1v1h-1zM582 248h1v1h-1zM582 252h1v1h-1zM582 254h1v1h-1zM582 258h1v1h-1zM582 259h1v1h-1zM582 262h1v1h-1zM582 267h1v1h-1zM582 268h1v1h-1zM582 272h1v1h-1zM582 273h1v1h-1zM582 278h1v1h-1zM582 279h1v1h-1zM582 282h1v1h-1zM582 283h1v1h-1zM582 287h1v1h-1zM582 289h1v1h-1zM582 293h1v1h-1zM582 299h1v1h-1zM582 303h1v1h-1zM582 304h1v1h-1zM582 306h1v1h-1zM582 307h1v1h-1zM582 309h1v1h-1zM582 313h1v1h-1zM582 315h1v1h-1zM582 316h1v1h-1zM582 319h1v1h-1zM582 322h1v1h-1zM582 323h1v1h-1zM582 325h1v1h-1zM582 326h1v1h-1zM582 327h1v1h-1zM582 334h1v1h-1zM582 336h1v1h-1zM582 337h1v1h-1zM582 345h1v1h-1zM582 347h1v1h-1zM582 348h1v1h-1zM582 354h1v1h-1zM582 356h1v1h-1zM582 357h1v1h-1zM582 375h1v1h-1zM582 378h1v1h-1zM582 485h1v1h-1zM582 486h1v1h-1zM582 489h1v1h-1zM582 490h1v1h-1zM582 491h1v1h-1zM582 492h1v1h-1zM582 493h1v1h-1zM582 628h1v1h-1zM582 629h1v1h-1zM582 639h1v1h-1zM582 640h1v1h-1zM582 648h1v1h-1zM582 651h1v1h-1zM582 658h1v1h-1zM582 661h1v1h-1zM582 668h1v1h-1zM582 671h1v1h-1zM582 677h1v1h-1zM582 682h1v1h-1zM582 687h1v1h-1zM582 692h1v1h-1zM582 696h1v1h-1zM582 702h1v1h-1zM582 706h1v1h-1zM582 712h1v1h-1zM582 717h1v1h-1zM582 723h1v1h-1zM582 727h1v1h-1zM582 733h1v1h-1zM583 215h1v1h-1zM583 217h1v1h-1zM583 220h1v1h-1zM583 223h1v1h-1zM583 225h1v1h-1zM583 228h1v1h-1zM583 229h1v1h-1zM583 233h1v1h-1zM583 238h1v1h-1zM583 239h1v1h-1zM583 242h1v1h-1zM583 247h1v1h-1zM583 248h1v1h-1zM583 252h1v1h-1zM583 254h1v1h-1zM583 258h1v1h-1zM583 260h1v1h-1zM583 262h1v1h-1zM583 268h1v1h-1zM583 272h1v1h-1zM583 273h1v1h-1zM583 277h1v1h-1zM583 279h1v1h-1zM583 283h1v1h-1zM583 285h1v1h-1zM583 286h1v1h-1zM583 289h1v1h-1zM583 293h1v1h-1zM583 298h1v1h-1zM583 303h1v1h-1zM583 308h1v1h-1zM583 313h1v1h-1zM583 318h1v1h-1zM583 323h1v1h-1zM583 325h1v1h-1zM583 326h1v1h-1zM583 371h1v1h-1zM583 372h1v1h-1zM583 374h1v1h-1zM583 377h1v1h-1zM583 378h1v1h-1zM583 379h1v1h-1zM583 485h1v1h-1zM583 490h1v1h-1zM583 491h1v1h-1zM583 608h1v1h-1zM583 609h1v1h-1zM583 617h1v1h-1zM583 618h1v1h-1zM583 627h1v1h-1zM583 630h1v1h-1zM583 638h1v1h-1zM583 641h1v1h-1zM583 647h1v1h-1zM583 652h1v1h-1zM583 657h1v1h-1zM583 662h1v1h-1zM583 667h1v1h-1zM583 672h1v1h-1zM583 677h1v1h-1zM583 683h1v1h-1zM583 687h1v1h-1zM583 693h1v1h-1zM583 696h1v1h-1zM583 702h1v1h-1zM583 706h1v1h-1zM583 712h1v1h-1zM583 717h1v1h-1zM583 722h1v1h-1zM583 727h1v1h-1zM583 732h1v1h-1zM584 215h1v1h-1zM584 216h1v1h-1zM584 221h1v1h-1zM584 223h1v1h-1zM584 224h1v1h-1zM584 229h1v1h-1zM584 233h1v1h-1zM584 239h1v1h-1zM584 242h1v1h-1zM584 247h1v1h-1zM584 248h1v1h-1zM584 252h1v1h-1zM584 254h1v1h-1zM584 257h1v1h-1zM584 260h1v1h-1zM584 262h1v1h-1zM584 267h1v1h-1zM584 268h1v1h-1zM584 273h1v1h-1zM584 275h1v1h-1zM584 276h1v1h-1zM584 278h1v1h-1zM584 283h1v1h-1zM584 288h1v1h-1zM584 294h1v1h-1zM584 296h1v1h-1zM584 297h1v1h-1zM584 304h1v1h-1zM584 306h1v1h-1zM584 307h1v1h-1zM584 314h1v1h-1zM584 316h1v1h-1zM584 317h1v1h-1zM584 370h1v1h-1zM584 372h1v1h-1zM584 373h1v1h-1zM584 374h1v1h-1zM584 376h1v1h-1zM584 379h1v1h-1zM584 380h1v1h-1zM584 485h1v1h-1zM584 490h1v1h-1zM584 491h1v1h-1zM584 587h1v1h-1zM584 588h1v1h-1zM584 597h1v1h-1zM584 598h1v1h-1zM584 607h1v1h-1zM584 610h1v1h-1zM584 616h1v1h-1zM584 619h1v1h-1zM584 626h1v1h-1zM584 631h1v1h-1zM584 637h1v1h-1zM584 642h1v1h-1zM584 647h1v1h-1zM584 653h1v1h-1zM584 657h1v1h-1zM584 663h1v1h-1zM584 667h1v1h-1zM584 673h1v1h-1zM584 677h1v1h-1zM584 683h1v1h-1zM584 687h1v1h-1zM584 693h1v1h-1zM584 696h1v1h-1zM584 701h1v1h-1zM584 706h1v1h-1zM584 711h1v1h-1zM584 718h1v1h-1zM584 720h1v1h-1zM584 721h1v1h-1zM584 728h1v1h-1zM584 730h1v1h-1zM584 731h1v1h-1zM585 215h1v1h-1zM585 216h1v1h-1zM585 221h1v1h-1zM585 222h1v1h-1zM585 223h1v1h-1zM585 224h1v1h-1zM585 228h1v1h-1zM585 230h1v1h-1zM585 233h1v1h-1zM585 238h1v1h-1zM585 239h1v1h-1zM585 242h1v1h-1zM585 243h1v1h-1zM585 245h1v1h-1zM585 246h1v1h-1zM585 248h1v1h-1zM585 253h1v1h-1zM585 254h1v1h-1zM585 255h1v1h-1zM585 256h1v1h-1zM585 259h1v1h-1zM585 262h1v1h-1zM585 263h1v1h-1zM585 265h1v1h-1zM585 266h1v1h-1zM585 267h1v1h-1zM585 274h1v1h-1zM585 276h1v1h-1zM585 277h1v1h-1zM585 284h1v1h-1zM585 286h1v1h-1zM585 287h1v1h-1zM585 369h1v1h-1zM585 371h1v1h-1zM585 374h1v1h-1zM585 375h1v1h-1zM585 380h1v1h-1zM585 485h1v1h-1zM585 486h1v1h-1zM585 488h1v1h-1zM585 489h1v1h-1zM585 491h1v1h-1zM585 558h1v1h-1zM585 559h1v1h-1zM585 568h1v1h-1zM585 569h1v1h-1zM585 578h1v1h-1zM585 579h1v1h-1zM585 586h1v1h-1zM585 589h1v1h-1zM585 596h1v1h-1zM585 599h1v1h-1zM585 606h1v1h-1zM585 611h1v1h-1zM585 615h1v1h-1zM585 620h1v1h-1zM585 626h1v1h-1zM585 632h1v1h-1zM585 637h1v1h-1zM585 643h1v1h-1zM585 647h1v1h-1zM585 653h1v1h-1zM585 657h1v1h-1zM585 663h1v1h-1zM585 667h1v1h-1zM585 673h1v1h-1zM585 677h1v1h-1zM585 682h1v1h-1zM585 687h1v1h-1zM585 692h1v1h-1zM585 697h1v1h-1zM585 699h1v1h-1zM585 700h1v1h-1zM585 707h1v1h-1zM585 709h1v1h-1zM585 710h1v1h-1zM586 215h1v1h-1zM586 216h1v1h-1zM586 220h1v1h-1zM586 222h1v1h-1zM586 224h1v1h-1zM586 226h1v1h-1zM586 227h1v1h-1zM586 230h1v1h-1zM586 233h1v1h-1zM586 234h1v1h-1zM586 236h1v1h-1zM586 237h1v1h-1zM586 238h1v1h-1zM586 242h1v1h-1zM586 247h1v1h-1zM586 255h1v1h-1zM586 257h1v1h-1zM586 258h1v1h-1zM586 263h1v1h-1zM586 265h1v1h-1zM586 266h1v1h-1zM586 369h1v1h-1zM586 370h1v1h-1zM586 374h1v1h-1zM586 375h1v1h-1zM586 379h1v1h-1zM586 381h1v1h-1zM586 484h1v1h-1zM586 485h1v1h-1zM586 488h1v1h-1zM586 489h1v1h-1zM586 490h1v1h-1zM586 511h1v1h-1zM586 512h1v1h-1zM586 538h1v1h-1zM586 539h1v1h-1zM586 547h1v1h-1zM586 548h1v1h-1zM586 557h1v1h-1zM586 560h1v1h-1zM586 567h1v1h-1zM586 570h1v1h-1zM586 577h1v1h-1zM586 580h1v1h-1zM586 585h1v1h-1zM586 590h1v1h-1zM586 595h1v1h-1zM586 600h1v1h-1zM586 606h1v1h-1zM586 612h1v1h-1zM586 615h1v1h-1zM586 621h1v1h-1zM586 626h1v1h-1zM586 632h1v1h-1zM586 637h1v1h-1zM586 643h1v1h-1zM586 647h1v1h-1zM586 652h1v1h-1zM586 657h1v1h-1zM586 662h1v1h-1zM586 667h1v1h-1zM586 672h1v1h-1zM586 678h1v1h-1zM586 680h1v1h-1zM586 681h1v1h-1zM586 688h1v1h-1zM586 690h1v1h-1zM586 691h1v1h-1zM587 216h1v1h-1zM587 218h1v1h-1zM587 219h1v1h-1zM587 221h1v1h-1zM587 224h1v1h-1zM587 229h1v1h-1zM587 234h1v1h-1zM587 236h1v1h-1zM587 237h1v1h-1zM587 243h1v1h-1zM587 245h1v1h-1zM587 246h1v1h-1zM587 369h1v1h-1zM587 370h1v1h-1zM587 375h1v1h-1zM587 376h1v1h-1zM587 377h1v1h-1zM587 378h1v1h-1zM587 381h1v1h-1zM587 476h1v1h-1zM587 477h1v1h-1zM587 483h1v1h-1zM587 486h1v1h-1zM587 487h1v1h-1zM587 488h1v1h-1zM587 489h1v1h-1zM587 490h1v1h-1zM587 510h1v1h-1zM587 513h1v1h-1zM587 516h1v1h-1zM587 517h1v1h-1zM587 528h1v1h-1zM587 529h1v1h-1zM587 537h1v1h-1zM587 540h1v1h-1zM587 546h1v1h-1zM587 549h1v1h-1zM587 556h1v1h-1zM587 561h1v1h-1zM587 566h1v1h-1zM587 571h1v1h-1zM587 576h1v1h-1zM587 581h1v1h-1zM587 585h1v1h-1zM587 591h1v1h-1zM587 595h1v1h-1zM587 601h1v1h-1zM587 606h1v1h-1zM587 612h1v1h-1zM587 615h1v1h-1zM587 621h1v1h-1zM587 626h1v1h-1zM587 631h1v1h-1zM587 637h1v1h-1zM587 642h1v1h-1zM587 648h1v1h-1zM587 650h1v1h-1zM587 651h1v1h-1zM587 658h1v1h-1zM587 660h1v1h-1zM587 661h1v1h-1zM587 668h1v1h-1zM587 670h1v1h-1zM587 671h1v1h-1zM588 217h1v1h-1zM588 219h1v1h-1zM588 220h1v1h-1zM588 225h1v1h-1zM588 227h1v1h-1zM588 228h1v1h-1zM588 369h1v1h-1zM588 370h1v1h-1zM588 374h1v1h-1zM588 375h1v1h-1zM588 376h1v1h-1zM588 380h1v1h-1zM588 453h1v1h-1zM588 454h1v1h-1zM588 457h1v1h-1zM588 458h1v1h-1zM588 467h1v1h-1zM588 468h1v1h-1zM588 475h1v1h-1zM588 478h1v1h-1zM588 482h1v1h-1zM588 486h1v1h-1zM588 487h1v1h-1zM588 489h1v1h-1zM588 490h1v1h-1zM588 491h1v1h-1zM588 494h1v1h-1zM588 495h1v1h-1zM588 498h1v1h-1zM588 499h1v1h-1zM588 508h1v1h-1zM588 509h1v1h-1zM588 514h1v1h-1zM588 515h1v1h-1zM588 518h1v1h-1zM588 527h1v1h-1zM588 530h1v1h-1zM588 536h1v1h-1zM588 541h1v1h-1zM588 545h1v1h-1zM588 550h1v1h-1zM588 556h1v1h-1zM588 562h1v1h-1zM588 566h1v1h-1zM588 572h1v1h-1zM588 576h1v1h-1zM588 582h1v1h-1zM588 585h1v1h-1zM588 591h1v1h-1zM588 595h1v1h-1zM588 601h1v1h-1zM588 606h1v1h-1zM588 611h1v1h-1zM588 615h1v1h-1zM588 620h1v1h-1zM588 627h1v1h-1zM588 629h1v1h-1zM588 630h1v1h-1zM588 638h1v1h-1zM588 640h1v1h-1zM588 641h1v1h-1zM589 370h1v1h-1zM589 372h1v1h-1zM589 373h1v1h-1zM589 375h1v1h-1zM589 376h1v1h-1zM589 378h1v1h-1zM589 379h1v1h-1zM589 427h1v1h-1zM589 428h1v1h-1zM589 437h1v1h-1zM589 438h1v1h-1zM589 446h1v1h-1zM589 447h1v1h-1zM589 452h1v1h-1zM589 455h1v1h-1zM589 456h1v1h-1zM589 459h1v1h-1zM589 466h1v1h-1zM589 469h1v1h-1zM589 474h1v1h-1zM589 479h1v1h-1zM589 482h1v1h-1zM589 486h1v1h-1zM589 487h1v1h-1zM589 488h1v1h-1zM589 489h1v1h-1zM589 490h1v1h-1zM589 491h1v1h-1zM589 492h1v1h-1zM589 493h1v1h-1zM589 496h1v1h-1zM589 497h1v1h-1zM589 500h1v1h-1zM589 507h1v1h-1zM589 509h1v1h-1zM589 510h1v1h-1zM589 514h1v1h-1zM589 515h1v1h-1zM589 519h1v1h-1zM589 526h1v1h-1zM589 531h1v1h-1zM589 536h1v1h-1zM589 542h1v1h-1zM589 545h1v1h-1zM589 551h1v1h-1zM589 556h1v1h-1zM589 562h1v1h-1zM589 566h1v1h-1zM589 572h1v1h-1zM589 576h1v1h-1zM589 582h1v1h-1zM589 585h1v1h-1zM589 590h1v1h-1zM589 595h1v1h-1zM589 600h1v1h-1zM589 607h1v1h-1zM589 609h1v1h-1zM589 610h1v1h-1zM589 616h1v1h-1zM589 618h1v1h-1zM589 619h1v1h-1zM590 371h1v1h-1zM590 373h1v1h-1zM590 374h1v1h-1zM590 405h1v1h-1zM590 406h1v1h-1zM590 416h1v1h-1zM590 417h1v1h-1zM590 426h1v1h-1zM590 429h1v1h-1zM590 436h1v1h-1zM590 439h1v1h-1zM590 445h1v1h-1zM590 448h1v1h-1zM590 451h1v1h-1zM590 455h1v1h-1zM590 456h1v1h-1zM590 460h1v1h-1zM590 465h1v1h-1zM590 470h1v1h-1zM590 474h1v1h-1zM590 480h1v1h-1zM590 482h1v1h-1zM590 486h1v1h-1zM590 487h1v1h-1zM590 488h1v1h-1zM590 489h1v1h-1zM590 490h1v1h-1zM590 491h1v1h-1zM590 492h1v1h-1zM590 493h1v1h-1zM590 496h1v1h-1zM590 497h1v1h-1zM590 501h1v1h-1zM590 506h1v1h-1zM590 509h1v1h-1zM590 511h1v1h-1zM590 514h1v1h-1zM590 515h1v1h-1zM590 520h1v1h-1zM590 526h1v1h-1zM590 532h1v1h-1zM590 536h1v1h-1zM590 542h1v1h-1zM590 545h1v1h-1zM590 551h1v1h-1zM590 556h1v1h-1zM590 561h1v1h-1zM590 566h1v1h-1zM590 571h1v1h-1zM590 576h1v1h-1zM590 581h1v1h-1zM590 586h1v1h-1zM590 588h1v1h-1zM590 589h1v1h-1zM590 596h1v1h-1zM590 598h1v1h-1zM590 599h1v1h-1zM591 386h1v1h-1zM591 387h1v1h-1zM591 396h1v1h-1zM591 397h1v1h-1zM591 404h1v1h-1zM591 407h1v1h-1zM591 415h1v1h-1zM591 418h1v1h-1zM591 425h1v1h-1zM591 430h1v1h-1zM591 435h1v1h-1zM591 440h1v1h-1zM591 444h1v1h-1zM591 449h1v1h-1zM591 451h1v1h-1zM591 455h1v1h-1zM591 457h1v1h-1zM591 461h1v1h-1zM591 465h1v1h-1zM591 471h1v1h-1zM591 474h1v1h-1zM591 480h1v1h-1zM591 482h1v1h-1zM591 485h1v1h-1zM591 486h1v1h-1zM591 487h1v1h-1zM591 488h1v1h-1zM591 489h1v1h-1zM591 490h1v1h-1zM591 491h1v1h-1zM591 492h1v1h-1zM591 493h1v1h-1zM591 494h1v1h-1zM591 496h1v1h-1zM591 498h1v1h-1zM591 502h1v1h-1zM591 506h1v1h-1zM591 509h1v1h-1zM591 512h1v1h-1zM591 514h1v1h-1zM591 520h1v1h-1zM591 526h1v1h-1zM591 532h1v1h-1zM591 536h1v1h-1zM591 541h1v1h-1zM591 545h1v1h-1zM591 550h1v1h-1zM591 557h1v1h-1zM591 559h1v1h-1zM591 560h1v1h-1zM591 567h1v1h-1zM591 569h1v1h-1zM591 570h1v1h-1zM591 577h1v1h-1zM591 579h1v1h-1zM591 580h1v1h-1zM592 378h1v1h-1zM592 379h1v1h-1zM592 385h1v1h-1zM592 388h1v1h-1zM592 395h1v1h-1zM592 398h1v1h-1zM592 403h1v1h-1zM592 408h1v1h-1zM592 414h1v1h-1zM592 419h1v1h-1zM592 425h1v1h-1zM592 431h1v1h-1zM592 435h1v1h-1zM592 441h1v1h-1zM592 444h1v1h-1zM592 450h1v1h-1zM592 451h1v1h-1zM592 455h1v1h-1zM592 457h1v1h-1zM592 461h1v1h-1zM592 465h1v1h-1zM592 471h1v1h-1zM592 474h1v1h-1zM592 479h1v1h-1zM592 483h1v1h-1zM592 484h1v1h-1zM592 485h1v1h-1zM592 486h1v1h-1zM592 487h1v1h-1zM592 488h1v1h-1zM592 489h1v1h-1zM592 490h1v1h-1zM592 491h1v1h-1zM592 492h1v1h-1zM592 493h1v1h-1zM592 494h1v1h-1zM592 496h1v1h-1zM592 498h1v1h-1zM592 502h1v1h-1zM592 506h1v1h-1zM592 510h1v1h-1zM592 512h1v1h-1zM592 513h1v1h-1zM592 514h1v1h-1zM592 519h1v1h-1zM592 526h1v1h-1zM592 531h1v1h-1zM592 537h1v1h-1zM592 539h1v1h-1zM592 540h1v1h-1zM592 546h1v1h-1zM592 548h1v1h-1zM592 549h1v1h-1zM593 376h1v1h-1zM593 377h1v1h-1zM593 380h1v1h-1zM593 384h1v1h-1zM593 389h1v1h-1zM593 394h1v1h-1zM593 399h1v1h-1zM593 403h1v1h-1zM593 409h1v1h-1zM593 414h1v1h-1zM593 420h1v1h-1zM593 425h1v1h-1zM593 431h1v1h-1zM593 435h1v1h-1zM593 441h1v1h-1zM593 444h1v1h-1zM593 450h1v1h-1zM593 451h1v1h-1zM593 455h1v1h-1zM593 456h1v1h-1zM593 460h1v1h-1zM593 465h1v1h-1zM593 470h1v1h-1zM593 475h1v1h-1zM593 477h1v1h-1zM593 478h1v1h-1zM593 484h1v1h-1zM593 487h1v1h-1zM593 488h1v1h-1zM593 489h1v1h-1zM593 490h1v1h-1zM593 491h1v1h-1zM593 492h1v1h-1zM593 493h1v1h-1zM593 494h1v1h-1zM593 496h1v1h-1zM593 497h1v1h-1zM593 501h1v1h-1zM593 506h1v1h-1zM593 511h1v1h-1zM593 515h1v1h-1zM593 517h1v1h-1zM593 518h1v1h-1zM593 527h1v1h-1zM593 529h1v1h-1zM593 530h1v1h-1zM594 356h1v1h-1zM594 357h1v1h-1zM594 366h1v1h-1zM594 367h1v1h-1zM594 374h1v1h-1zM594 375h1v1h-1zM594 376h1v1h-1zM594 377h1v1h-1zM594 378h1v1h-1zM594 379h1v1h-1zM594 380h1v1h-1zM594 381h1v1h-1zM594 384h1v1h-1zM594 390h1v1h-1zM594 394h1v1h-1zM594 400h1v1h-1zM594 403h1v1h-1zM594 409h1v1h-1zM594 414h1v1h-1zM594 420h1v1h-1zM594 425h1v1h-1zM594 430h1v1h-1zM594 435h1v1h-1zM594 440h1v1h-1zM594 444h1v1h-1zM594 449h1v1h-1zM594 452h1v1h-1zM594 454h1v1h-1zM594 455h1v1h-1zM594 456h1v1h-1zM594 458h1v1h-1zM594 459h1v1h-1zM594 466h1v1h-1zM594 468h1v1h-1zM594 469h1v1h-1zM594 484h1v1h-1zM594 487h1v1h-1zM594 488h1v1h-1zM594 489h1v1h-1zM594 490h1v1h-1zM594 491h1v1h-1zM594 492h1v1h-1zM594 493h1v1h-1zM594 495h1v1h-1zM594 496h1v1h-1zM594 497h1v1h-1zM594 499h1v1h-1zM594 500h1v1h-1zM594 507h1v1h-1zM594 509h1v1h-1zM594 510h1v1h-1zM595 325h1v1h-1zM595 326h1v1h-1zM595 336h1v1h-1zM595 337h1v1h-1zM595 346h1v1h-1zM595 347h1v1h-1zM595 355h1v1h-1zM595 358h1v1h-1zM595 365h1v1h-1zM595 368h1v1h-1zM595 373h1v1h-1zM595 374h1v1h-1zM595 375h1v1h-1zM595 376h1v1h-1zM595 377h1v1h-1zM595 378h1v1h-1zM595 379h1v1h-1zM595 380h1v1h-1zM595 382h1v1h-1zM595 384h1v1h-1zM595 390h1v1h-1zM595 394h1v1h-1zM595 400h1v1h-1zM595 403h1v1h-1zM595 408h1v1h-1zM595 414h1v1h-1zM595 419h1v1h-1zM595 426h1v1h-1zM595 428h1v1h-1zM595 429h1v1h-1zM595 436h1v1h-1zM595 438h1v1h-1zM595 439h1v1h-1zM595 445h1v1h-1zM595 447h1v1h-1zM595 448h1v1h-1zM595 484h1v1h-1zM595 489h1v1h-1zM595 490h1v1h-1zM595 491h1v1h-1zM595 496h1v1h-1zM596 306h1v1h-1zM596 307h1v1h-1zM596 315h1v1h-1zM596 316h1v1h-1zM596 324h1v1h-1zM596 327h1v1h-1zM596 335h1v1h-1zM596 338h1v1h-1zM596 345h1v1h-1zM596 348h1v1h-1zM596 354h1v1h-1zM596 359h1v1h-1zM596 364h1v1h-1zM596 369h1v1h-1zM596 372h1v1h-1zM596 374h1v1h-1zM596 375h1v1h-1zM596 376h1v1h-1zM596 377h1v1h-1zM596 378h1v1h-1zM596 379h1v1h-1zM596 380h1v1h-1zM596 381h1v1h-1zM596 382h1v1h-1zM596 384h1v1h-1zM596 389h1v1h-1zM596 394h1v1h-1zM596 399h1v1h-1zM596 404h1v1h-1zM596 406h1v1h-1zM596 407h1v1h-1zM596 415h1v1h-1zM596 417h1v1h-1zM596 418h1v1h-1zM596 485h1v1h-1zM596 487h1v1h-1zM596 488h1v1h-1zM596 490h1v1h-1zM596 496h1v1h-1zM597 286h1v1h-1zM597 287h1v1h-1zM597 305h1v1h-1zM597 308h1v1h-1zM597 314h1v1h-1zM597 317h1v1h-1zM597 323h1v1h-1zM597 328h1v1h-1zM597 334h1v1h-1zM597 339h1v1h-1zM597 344h1v1h-1zM597 349h1v1h-1zM597 354h1v1h-1zM597 360h1v1h-1zM597 364h1v1h-1zM597 370h1v1h-1zM597 371h1v1h-1zM597 372h1v1h-1zM597 374h1v1h-1zM597 375h1v1h-1zM597 376h1v1h-1zM597 377h1v1h-1zM597 378h1v1h-1zM597 379h1v1h-1zM597 380h1v1h-1zM597 381h1v1h-1zM597 385h1v1h-1zM597 387h1v1h-1zM597 388h1v1h-1zM597 395h1v1h-1zM597 397h1v1h-1zM597 398h1v1h-1zM597 490h1v1h-1zM597 495h1v1h-1zM598 265h1v1h-1zM598 266h1v1h-1zM598 275h1v1h-1zM598 276h1v1h-1zM598 285h1v1h-1zM598 288h1v1h-1zM598 296h1v1h-1zM598 297h1v1h-1zM598 304h1v1h-1zM598 309h1v1h-1zM598 313h1v1h-1zM598 318h1v1h-1zM598 323h1v1h-1zM598 329h1v1h-1zM598 334h1v1h-1zM598 340h1v1h-1zM598 344h1v1h-1zM598 347h1v1h-1zM598 348h1v1h-1zM598 350h1v1h-1zM598 354h1v1h-1zM598 360h1v1h-1zM598 364h1v1h-1zM598 370h1v1h-1zM598 372h1v1h-1zM598 373h1v1h-1zM598 374h1v1h-1zM598 375h1v1h-1zM598 376h1v1h-1zM598 377h1v1h-1zM598 378h1v1h-1zM598 379h1v1h-1zM598 380h1v1h-1zM598 381h1v1h-1zM598 491h1v1h-1zM598 493h1v1h-1zM598 494h1v1h-1zM599 246h1v1h-1zM599 247h1v1h-1zM599 256h1v1h-1zM599 257h1v1h-1zM599 264h1v1h-1zM599 267h1v1h-1zM599 274h1v1h-1zM599 277h1v1h-1zM599 284h1v1h-1zM599 289h1v1h-1zM599 295h1v1h-1zM599 298h1v1h-1zM599 304h1v1h-1zM599 310h1v1h-1zM599 313h1v1h-1zM599 319h1v1h-1zM599 323h1v1h-1zM599 329h1v1h-1zM599 334h1v1h-1zM599 340h1v1h-1zM599 344h1v1h-1zM599 346h1v1h-1zM599 349h1v1h-1zM599 350h1v1h-1zM599 354h1v1h-1zM599 359h1v1h-1zM599 364h1v1h-1zM599 369h1v1h-1zM599 372h1v1h-1zM599 374h1v1h-1zM599 375h1v1h-1zM599 376h1v1h-1zM599 377h1v1h-1zM599 378h1v1h-1zM599 379h1v1h-1zM599 380h1v1h-1zM599 382h1v1h-1zM600 225h1v1h-1zM600 226h1v1h-1zM600 236h1v1h-1zM600 237h1v1h-1zM600 245h1v1h-1zM600 248h1v1h-1zM600 255h1v1h-1zM600 258h1v1h-1zM600 263h1v1h-1zM600 268h1v1h-1zM600 273h1v1h-1zM600 278h1v1h-1zM600 284h1v1h-1zM600 290h1v1h-1zM600 294h1v1h-1zM600 296h1v1h-1zM600 297h1v1h-1zM600 299h1v1h-1zM600 304h1v1h-1zM600 310h1v1h-1zM600 313h1v1h-1zM600 319h1v1h-1zM600 321h1v1h-1zM600 322h1v1h-1zM600 323h1v1h-1zM600 328h1v1h-1zM600 334h1v1h-1zM600 339h1v1h-1zM600 344h1v1h-1zM600 345h1v1h-1zM600 349h1v1h-1zM600 350h1v1h-1zM600 355h1v1h-1zM600 357h1v1h-1zM600 358h1v1h-1zM600 365h1v1h-1zM600 367h1v1h-1zM600 368h1v1h-1zM600 369h1v1h-1zM600 373h1v1h-1zM600 375h1v1h-1zM600 376h1v1h-1zM600 377h1v1h-1zM600 378h1v1h-1zM600 379h1v1h-1zM600 380h1v1h-1zM600 382h1v1h-1zM601 206h1v1h-1zM601 207h1v1h-1zM601 214h1v1h-1zM601 215h1v1h-1zM601 224h1v1h-1zM601 227h1v1h-1zM601 235h1v1h-1zM601 238h1v1h-1zM601 244h1v1h-1zM601 249h1v1h-1zM601 254h1v1h-1zM601 259h1v1h-1zM601 263h1v1h-1zM601 269h1v1h-1zM601 273h1v1h-1zM601 279h1v1h-1zM601 284h1v1h-1zM601 290h1v1h-1zM601 294h1v1h-1zM601 295h1v1h-1zM601 298h1v1h-1zM601 300h1v1h-1zM601 304h1v1h-1zM601 309h1v1h-1zM601 313h1v1h-1zM601 318h1v1h-1zM601 320h1v1h-1zM601 323h1v1h-1zM601 324h1v1h-1zM601 326h1v1h-1zM601 327h1v1h-1zM601 335h1v1h-1zM601 337h1v1h-1zM601 338h1v1h-1zM601 345h1v1h-1zM601 347h1v1h-1zM601 348h1v1h-1zM601 351h1v1h-1zM601 369h1v1h-1zM601 375h1v1h-1zM601 376h1v1h-1zM601 381h1v1h-1zM602 185h1v1h-1zM602 186h1v1h-1zM602 195h1v1h-1zM602 196h1v1h-1zM602 205h1v1h-1zM602 208h1v1h-1zM602 213h1v1h-1zM602 216h1v1h-1zM602 223h1v1h-1zM602 228h1v1h-1zM602 234h1v1h-1zM602 239h1v1h-1zM602 244h1v1h-1zM602 250h1v1h-1zM602 254h1v1h-1zM602 260h1v1h-1zM602 263h1v1h-1zM602 269h1v1h-1zM602 270h1v1h-1zM602 271h1v1h-1zM602 273h1v1h-1zM602 279h1v1h-1zM602 284h1v1h-1zM602 289h1v1h-1zM602 294h1v1h-1zM602 299h1v1h-1zM602 300h1v1h-1zM602 305h1v1h-1zM602 307h1v1h-1zM602 308h1v1h-1zM602 314h1v1h-1zM602 316h1v1h-1zM602 317h1v1h-1zM602 319h1v1h-1zM602 324h1v1h-1zM602 345h1v1h-1zM602 351h1v1h-1zM602 369h1v1h-1zM602 374h1v1h-1zM602 377h1v1h-1zM602 379h1v1h-1zM602 380h1v1h-1zM603 160h1v1h-1zM603 161h1v1h-1zM603 166h1v1h-1zM603 167h1v1h-1zM603 174h1v1h-1zM603 175h1v1h-1zM603 184h1v1h-1zM603 187h1v1h-1zM603 194h1v1h-1zM603 197h1v1h-1zM603 204h1v1h-1zM603 209h1v1h-1zM603 212h1v1h-1zM603 217h1v1h-1zM603 223h1v1h-1zM603 229h1v1h-1zM603 234h1v1h-1zM603 240h1v1h-1zM603 244h1v1h-1zM603 250h1v1h-1zM603 254h1v1h-1zM603 260h1v1h-1zM603 263h1v1h-1zM603 268h1v1h-1zM603 269h1v1h-1zM603 272h1v1h-1zM603 273h1v1h-1zM603 278h1v1h-1zM603 285h1v1h-1zM603 287h1v1h-1zM603 288h1v1h-1zM603 294h1v1h-1zM603 299h1v1h-1zM603 300h1v1h-1zM603 319h1v1h-1zM603 325h1v1h-1zM603 345h1v1h-1zM603 350h1v1h-1zM603 370h1v1h-1zM603 372h1v1h-1zM603 373h1v1h-1zM604 159h1v1h-1zM604 162h1v1h-1zM604 165h1v1h-1zM604 168h1v1h-1zM604 173h1v1h-1zM604 176h1v1h-1zM604 183h1v1h-1zM604 188h1v1h-1zM604 193h1v1h-1zM604 198h1v1h-1zM604 204h1v1h-1zM604 210h1v1h-1zM604 212h1v1h-1zM604 218h1v1h-1zM604 220h1v1h-1zM604 221h1v1h-1zM604 223h1v1h-1zM604 229h1v1h-1zM604 234h1v1h-1zM604 240h1v1h-1zM604 244h1v1h-1zM604 245h1v1h-1zM604 249h1v1h-1zM604 254h1v1h-1zM604 259h1v1h-1zM604 264h1v1h-1zM604 266h1v1h-1zM604 267h1v1h-1zM604 268h1v1h-1zM604 273h1v1h-1zM604 274h1v1h-1zM604 276h1v1h-1zM604 277h1v1h-1zM604 294h1v1h-1zM604 295h1v1h-1zM604 297h1v1h-1zM604 298h1v1h-1zM604 300h1v1h-1zM604 319h1v1h-1zM604 325h1v1h-1zM604 346h1v1h-1zM604 348h1v1h-1zM604 349h1v1h-1zM605 158h1v1h-1zM605 163h1v1h-1zM605 164h1v1h-1zM605 169h1v1h-1zM605 172h1v1h-1zM605 177h1v1h-1zM605 183h1v1h-1zM605 189h1v1h-1zM605 193h1v1h-1zM605 196h1v1h-1zM605 197h1v1h-1zM605 199h1v1h-1zM605 204h1v1h-1zM605 210h1v1h-1zM605 212h1v1h-1zM605 218h1v1h-1zM605 219h1v1h-1zM605 222h1v1h-1zM605 223h1v1h-1zM605 228h1v1h-1zM605 234h1v1h-1zM605 239h1v1h-1zM605 243h1v1h-1zM605 245h1v1h-1zM605 246h1v1h-1zM605 247h1v1h-1zM605 248h1v1h-1zM605 255h1v1h-1zM605 257h1v1h-1zM605 258h1v1h-1zM605 268h1v1h-1zM605 274h1v1h-1zM605 294h1v1h-1zM605 299h1v1h-1zM605 319h1v1h-1zM605 324h1v1h-1zM606 158h1v1h-1zM606 164h1v1h-1zM606 170h1v1h-1zM606 171h1v1h-1zM606 172h1v1h-1zM606 178h1v1h-1zM606 183h1v1h-1zM606 189h1v1h-1zM606 193h1v1h-1zM606 195h1v1h-1zM606 198h1v1h-1zM606 199h1v1h-1zM606 204h1v1h-1zM606 209h1v1h-1zM606 212h1v1h-1zM606 217h1v1h-1zM606 218h1v1h-1zM606 223h1v1h-1zM606 224h1v1h-1zM606 226h1v1h-1zM606 227h1v1h-1zM606 235h1v1h-1zM606 237h1v1h-1zM606 238h1v1h-1zM606 242h1v1h-1zM606 247h1v1h-1zM606 268h1v1h-1zM606 274h1v1h-1zM606 295h1v1h-1zM606 297h1v1h-1zM606 298h1v1h-1zM606 320h1v1h-1zM606 322h1v1h-1zM606 323h1v1h-1zM607 158h1v1h-1zM607 164h1v1h-1zM607 169h1v1h-1zM607 170h1v1h-1zM607 172h1v1h-1zM607 178h1v1h-1zM607 183h1v1h-1zM607 188h1v1h-1zM607 193h1v1h-1zM607 194h1v1h-1zM607 198h1v1h-1zM607 199h1v1h-1zM607 205h1v1h-1zM607 207h1v1h-1zM607 208h1v1h-1zM607 213h1v1h-1zM607 215h1v1h-1zM607 216h1v1h-1zM607 218h1v1h-1zM607 224h1v1h-1zM607 242h1v1h-1zM607 248h1v1h-1zM607 268h1v1h-1zM607 273h1v1h-1zM608 158h1v1h-1zM608 162h1v1h-1zM608 163h1v1h-1zM608 164h1v1h-1zM608 168h1v1h-1zM608 169h1v1h-1zM608 172h1v1h-1zM608 173h1v1h-1zM608 177h1v1h-1zM608 184h1v1h-1zM608 186h1v1h-1zM608 187h1v1h-1zM608 194h1v1h-1zM608 196h1v1h-1zM608 197h1v1h-1zM608 200h1v1h-1zM608 218h1v1h-1zM608 224h1v1h-1zM608 242h1v1h-1zM608 248h1v1h-1zM608 269h1v1h-1zM608 271h1v1h-1zM608 272h1v1h-1zM609 159h1v1h-1zM609 161h1v1h-1zM609 162h1v1h-1zM609 164h1v1h-1zM609 165h1v1h-1zM609 167h1v1h-1zM609 168h1v1h-1zM609 173h1v1h-1zM609 174h1v1h-1zM609 175h1v1h-1zM609 176h1v1h-1zM609 194h1v1h-1zM609 200h1v1h-1zM609 218h1v1h-1zM609 223h1v1h-1zM609 242h1v1h-1zM609 247h1v1h-1zM610 160h1v1h-1zM610 165h1v1h-1zM610 168h1v1h-1zM610 174h1v1h-1zM610 194h1v1h-1zM610 199h1v1h-1zM610 219h1v1h-1zM610 221h1v1h-1zM610 222h1v1h-1zM610 243h1v1h-1zM610 245h1v1h-1zM610 246h1v1h-1zM611 150h1v1h-1zM611 151h1v1h-1zM611 160h1v1h-1zM611 166h1v1h-1zM611 168h1v1h-1zM611 173h1v1h-1zM611 195h1v1h-1zM611 197h1v1h-1zM611 198h1v1h-1zM612 149h1v1h-1zM612 152h1v1h-1zM612 160h1v1h-1zM612 166h1v1h-1zM612 169h1v1h-1zM612 171h1v1h-1zM612 172h1v1h-1zM613 148h1v1h-1zM613 153h1v1h-1zM613 160h1v1h-1zM613 165h1v1h-1zM614 148h1v1h-1zM614 154h1v1h-1zM614 161h1v1h-1zM614 163h1v1h-1zM614 164h1v1h-1zM615 148h1v1h-1zM615 154h1v1h-1zM616 148h1v1h-1zM616 153h1v1h-1zM617 149h1v1h-1zM617 151h1v1h-1zM617 152h1v1h-1z"/>
</svg>
</body></html>
